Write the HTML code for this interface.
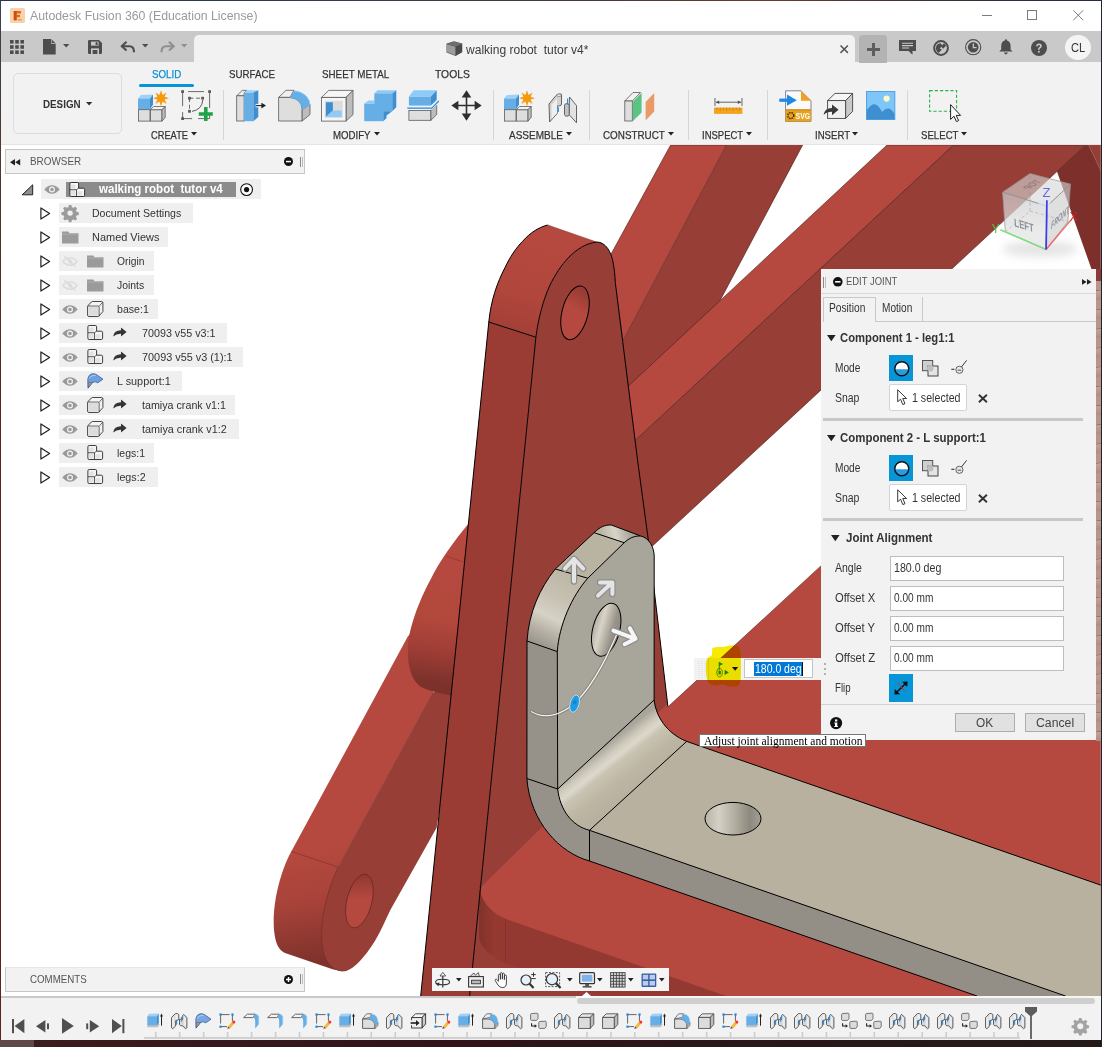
<!DOCTYPE html>
<html lang="en">
<head>
<meta charset="utf-8">
<title>Autodesk Fusion 360 (Education License)</title>
<style>
html,body{margin:0;padding:0;}
body{width:1102px;height:1047px;overflow:hidden;position:relative;background:#fff;font-family:"Liberation Sans",sans-serif;font-size:12px;color:#333;}
.abs{position:absolute;}
.t{position:absolute;white-space:nowrap;line-height:1;}
svg{position:absolute;overflow:visible;}
/*CSS-END*/
</style>
</head>
<body>
<!-- ===== 3D SCENE ===== -->
<svg id="scene" style="left:0;top:0" width="1102" height="1047" viewBox="0 0 1102 1047">
<defs>
<clipPath id="vp"><rect x="1" y="145" width="1099.8" height="851"/></clipPath>
<linearGradient id="gBaseFront" x1="479" y1="0" x2="510" y2="0" gradientUnits="userSpaceOnUse"><stop offset="0" stop-color="#7f322c"/><stop offset="0.5" stop-color="#96392f"/><stop offset="1" stop-color="#943832"/></linearGradient>
<linearGradient id="gArmEnd" x1="300" y1="850" x2="320" y2="960" gradientUnits="userSpaceOnUse"><stop offset="0" stop-color="#b5493f"/><stop offset="0.45" stop-color="#a9433a"/><stop offset="1" stop-color="#7f322c"/></linearGradient>
<linearGradient id="gKnob" x1="445" y1="560" x2="425" y2="695" gradientUnits="userSpaceOnUse"><stop offset="0" stop-color="#b5493f"/><stop offset="0.45" stop-color="#b2473c"/><stop offset="0.68" stop-color="#9d3d35"/><stop offset="0.88" stop-color="#7f322c"/><stop offset="1" stop-color="#7a302b"/></linearGradient>
<linearGradient id="gUpTop" x1="540" y1="230" x2="510" y2="335" gradientUnits="userSpaceOnUse"><stop offset="0" stop-color="#b5493f"/><stop offset="0.6" stop-color="#b1463c"/><stop offset="1" stop-color="#a23f37"/></linearGradient>
<linearGradient id="gHoleR" x1="350" y1="875" x2="365" y2="925" gradientUnits="userSpaceOnUse"><stop offset="0" stop-color="#8e3730"/><stop offset="0.5" stop-color="#b5493f"/><stop offset="1" stop-color="#b5493f"/></linearGradient>
<linearGradient id="gHoleR2" x1="585" y1="285" x2="570" y2="335" gradientUnits="userSpaceOnUse"><stop offset="0" stop-color="#8e3730"/><stop offset="0.5" stop-color="#b5493f"/><stop offset="1" stop-color="#b5493f"/></linearGradient>
<linearGradient id="gFillet" x1="606" y1="745" x2="638" y2="786" gradientUnits="userSpaceOnUse"><stop offset="0" stop-color="#a9a59b"/><stop offset="0.18" stop-color="#cfcabb"/><stop offset="0.3" stop-color="#dcd8cc"/><stop offset="0.42" stop-color="#c9c3b2"/><stop offset="0.7" stop-color="#bdb6a3"/><stop offset="1" stop-color="#b8b1a0"/></linearGradient>
<linearGradient id="gRound1" x1="575" y1="575" x2="540" y2="648" gradientUnits="userSpaceOnUse"><stop offset="0" stop-color="#bcb6a5"/><stop offset="0.35" stop-color="#c6c1b2"/><stop offset="0.6" stop-color="#d6d2c6"/><stop offset="0.8" stop-color="#b5b0a3"/><stop offset="1" stop-color="#96928a"/></linearGradient>
<linearGradient id="gRound2" x1="600" y1="535" x2="630" y2="530" gradientUnits="userSpaceOnUse"><stop offset="0" stop-color="#b9b3a2"/><stop offset="0.5" stop-color="#d8d4c8"/><stop offset="1" stop-color="#a8a59b"/></linearGradient>
<linearGradient id="gHoleG" x1="592" y1="0" x2="620" y2="0" gradientUnits="userSpaceOnUse"><stop offset="0" stop-color="#aeaa9e"/><stop offset="0.3" stop-color="#d8d4c9"/><stop offset="0.5" stop-color="#bcb7a9"/><stop offset="0.74" stop-color="#98948b"/><stop offset="1" stop-color="#8e8a82"/></linearGradient>
<linearGradient id="gHoleG2" x1="705" y1="0" x2="761" y2="0" gradientUnits="userSpaceOnUse"><stop offset="0" stop-color="#b9b4a6"/><stop offset="0.25" stop-color="#d4d0c5"/><stop offset="0.55" stop-color="#b0ab9d"/><stop offset="0.8" stop-color="#8d897f"/><stop offset="1" stop-color="#a39f93"/></linearGradient>
<filter id="blur4" x="-30%" y="-100%" width="160%" height="300%"><feGaussianBlur stdDeviation="4"/></filter>
<linearGradient id="gCubeL" x1="0" y1="195" x2="0" y2="250" gradientUnits="userSpaceOnUse"><stop offset="0" stop-color="#cfcfcf"/><stop offset="1" stop-color="#ececec"/></linearGradient>
<!--SCENE-DEFS-->
</defs>
<g clip-path="url(#vp)">
<rect x="0" y="140" width="1102" height="860" fill="#ffffff"/>
<g stroke="#4a1c18" stroke-width="0.6" stroke-linejoin="round">
<!-- far right beams -->
<polygon points="1088.5,145 1101,145 1101,171" fill="#963d35" stroke="none"/>
<polygon points="1084.8,145 1088.5,145 1101,171 1101,296 1056.9,171.2" fill="#7d302b" stroke="none"/>
<!-- beam 1 (steep) -->
<polygon points="726.3,145 802.7,145 720,300.7 715,330 622,420 623,340.6" fill="#973e36" stroke="none"/><path d="M802.7,145 L720,300.7" fill="none"/>
<polygon points="670.6,145 726.3,145 623,340.6 610,256" fill="#b5493f"/>
<!-- beam 2 -->
<polygon points="953.5,145 1084.8,145 1056.9,171.6 640,557.6 630,445.2" fill="#973e36"/>
<polygon points="887,145 953.5,145 630,445.2 624,390.1 720,300.7" fill="#b5493f"/>
<!-- lower-left arm -->
<path d="M440,600 L407.8,636.5 L291.3,851.5 C280,872 272,905 274,930 C275.5,945 279,950 285,952.9 L332.6,969.2 L342.7,971.2 L338.2,867.2 L433,692.5 L460,640 Z" fill="url(#gArmEnd)" stroke="none"/>
<path d="M433,692.5 L338.2,867.2 C326,892 319,925 322.6,947.9 C325,962 331,970 342.7,971.2 C352,972 365,957 375.2,940.4 C381,931 386,919 390.2,910.3 L436.6,827.7 L460,680 Z" fill="#973e36" stroke="none"/>
<path d="M291.3,851.5 L338.2,867.2" stroke="#6b2924" stroke-width="0.5" fill="none"/>
<path d="M433,692.5 L338.2,867.2 C326,892 319,925 322.6,947.9 C325,962 331,970 342.7,971.2" stroke="#6b2924" stroke-width="0.5" fill="none"/>
<ellipse cx="359.4" cy="901" rx="12.5" ry="27.5" transform="rotate(14 359.4 901)" fill="url(#gHoleR)" stroke="#5a211d" stroke-width="0.6"/>
<!-- knob -->
<path d="M468.4,523.8 C455,540 440,560 430.3,580 C418,603 408,630 407.8,650 C407.5,668 412,680 420.3,686.6 C430,692 440,693 452,696 L470,600 Z" fill="url(#gKnob)" stroke="none"/>
<path d="M446.6,556.3 L463.4,562" stroke="#7a2e29" stroke-width="0.5" fill="none"/>
<!-- upright side face -->
<path d="M488.8,322 L420.7,996 L469.6,996 L535.9,337.2 Z" fill="#9a3b34" stroke="none"/>
<path d="M488.8,322 C491,300 497,283 505,267.6 C510,257 516,248 522.6,241.3 C530,233 538,227.5 547.7,225 L596.5,242 C575,245 560,265 550,285 C543,300 538,320 535.9,337.2 Z" fill="url(#gUpTop)" stroke="none"/>
<!-- upright front face -->
<path d="M535.9,337.2 C538,320 543,300 550,285 C560,265 575,245 596.5,242 C606,242 611,252 613,262 C614.5,270 615,276 615.3,282.6 L637.8,462 L648,537.7 L667.9,706.4 L700,996 L469.6,996 Z" fill="#973e36" stroke="none"/>
<!-- base: big light red -->
<path d="M479.2,886 L479.2,938 Q481,952 505.5,963 L600,996 L730,996 L560,900 Z" fill="url(#gBaseFront)" stroke="none"/>
<path d="M479.4,888.5 L667.2,704 L667.7,707.1 L821.1,565.7 L1101,310 L1101,996 L726,996 L506.5,919.2 C494,914 482,904 479.4,888.5 Z" fill="#b5493f" stroke="none"/>
<line x1="667.7" y1="707.1" x2="830" y2="557.5" stroke-width="0.5"/>
<line x1="505.5" y1="919" x2="505.5" y2="963" stroke="#7a2e29" stroke-width="0.6"/>

<!-- upright outlines -->
<path d="M420.7,996 L488.8,322 C491,300 497,283 505,267.6 C510,257 516,248 522.6,241.3 C530,233 538,227.5 547.7,225" fill="none" stroke="#000" stroke-width="1"/><path d="M547.7,225 L596.5,242" fill="none" stroke="#7a2f29" stroke-width="0.5"/><path d="M596.5,242 C606,242 611,252 613,262 C614.5,270 615,276 615.3,282.6 L637.8,462 L648,537.7 L667.9,706.4" fill="none" stroke="#000" stroke-width="1"/>
<path d="M469.6,996 L535.9,337.2 C538,320 543,300 550,285 C560,265 575,245 596.5,242" fill="none" stroke="#000" stroke-width="1"/>
<path d="M488.8,322 L535.9,337.2" fill="none" stroke="#000" stroke-width="1"/>
<ellipse cx="575" cy="312.8" rx="13" ry="27.5" transform="rotate(14 575 312.8)" fill="url(#gHoleR2)" stroke="#000" stroke-width="1"/>
</g>
<!-- ===== grey L bracket ===== -->
<g stroke="#000" stroke-width="1" stroke-linejoin="round">
<!-- horizontal plate top face -->
<path d="M686.7,741.4 L1101,885.2 L1101,996 L1065.5,996 L589.5,830.3 Z" fill="#b8b1a0" stroke="none"/>
<!-- plate front face -->
<path d="M589.5,830.3 L1065.5,996 L977,996 L589.5,861 Z" fill="#948f86" stroke="none"/>
<!-- fillet face (between vertical and horizontal) -->
<path d="M557.7,789 L654.1,700 C656,716 666,733 686.7,741.4 L589.5,830.3 C572,826 560,810 557.7,789 Z" fill="url(#gFillet)" stroke="none"/>
<!-- side (thickness) face lower: from vertical down around bend -->
<path d="M526.9,778.5 L557.7,789 C560,810 572,826 589.5,830.3 L589.5,861 C560,853 530,822 526.9,778.5 Z" fill="#96928a" stroke="none"/>
<!-- side face vertical part -->
<path d="M527,641 L557.3,651.6 L557.7,789 L526.9,778.5 Z" fill="#96928a" stroke="none"/>
<!-- side face rounded top -->
<path d="M527,641 C529,612 540,588 555.3,569 L587.8,578.2 C572,596 559,625 557.3,651.6 Z" fill="url(#gRound1)" stroke="none"/>
<!-- side face diagonal flat -->
<path d="M555.3,569 L594.1,532.7 L624.2,542.7 L587.8,578.2 Z" fill="#b9b3a2" stroke="none"/>
<!-- side face top rounded -->
<path d="M594.1,532.7 C600,527 605,524.5 611.6,525.1 L640.4,535.9 C633,536 629,538.5 624.2,542.7 Z" fill="url(#gRound2)" stroke="none"/>
<!-- front face of vertical lobe -->
<path d="M557.3,651.6 C559,625 572,596 587.8,578.2 L624.2,542.7 C629,538.5 633,536 640.4,535.9 C650,538 654,548 654.2,556 L654.1,700 L557.7,789 Z" fill="#a8a59b" stroke="none"/>
<!-- outlines -->
<path d="M526.9,778.5 L527,641 C529,612 540,588 555.3,569 L594.1,532.7 C600,527 605,524.5 611.6,525.1 L640.4,535.9 C650,538 654,548 654.2,556 L654.1,700 C656,716 666,733 686.7,741.4 L1101,885.2" fill="none"/>
<path d="M557.7,789 L557.3,651.6 C559,625 572,596 587.8,578.2 L624.2,542.7 C629,538.5 633,536 640.4,535.9" fill="none"/>
<path d="M527,641 L557.3,651.6 M555.3,569 L587.8,578.2 M594.1,532.7 L624.2,542.7 M526.9,778.5 L557.7,789 L654.1,700 M589.5,830.3 L686.7,741.4 M589.5,830.3 L589.5,861" fill="none"/>
<path d="M557.7,789 C560,810 572,826 589.5,830.3 L1065.5,996" fill="none"/>
<path d="M526.9,778.5 C530,822 560,853 589.5,861 L977,996" fill="none"/>
<!-- holes -->
<ellipse cx="606.2" cy="629.7" rx="13.4" ry="27.2" transform="rotate(15 606.2 629.7)" fill="url(#gHoleG)"/>
<ellipse cx="733" cy="818.7" rx="28" ry="16.3" fill="url(#gHoleG2)"/>
</g>
<!-- manipulators -->
<g fill="none" stroke-linecap="round" stroke-linejoin="round">
<path d="M531.4,711.6 C546,720.5 562,714 574.5,703.4 C590,689 604,664 616.5,635" stroke="#6f6c66" stroke-opacity="0.42" stroke-width="3.4"/>
<path d="M531.4,711.6 C546,720.5 562,714 574.5,703.4 C590,689 604,664 616.5,635" stroke="#ffffff" stroke-width="1.05"/>
<g stroke="#8e8e8e" stroke-width="6.4"><path d="M574,581.5V560M565,568.6L574,558.8L583.2,568.6"/><path d="M598,595.6L611.4,583.2M600,582.4H612.4V594"/><path d="M613.4,630.6L634,638.4M629.8,628.2L635.6,638.8L624.6,644.2"/></g>
<g stroke="#e4e4e4" stroke-width="4"><path d="M574,581.5V560M565,568.6L574,558.8L583.2,568.6"/><path d="M598,595.6L611.4,583.2M600,582.4H612.4V594"/></g>
<g stroke="#f6f6f6" stroke-width="4"><path d="M613.4,630.6L634,638.4M629.8,628.2L635.6,638.8L624.6,644.2"/></g>
</g>
<g transform="rotate(15 574.6 703.6)"><ellipse cx="574.6" cy="703.6" rx="5.6" ry="10" fill="#8c8a84" fill-opacity="0.55"/><ellipse cx="574.6" cy="703.6" rx="4.5" ry="8.9" fill="#1d9ce6" stroke="#dfe9f0" stroke-width="0.8"/><ellipse cx="574.4" cy="702.4" rx="1.1" ry="1.5" fill="none" stroke="#0d5f96" stroke-width="0.6"/></g>
<!-- view cube -->
<ellipse cx="1040" cy="249" rx="38" ry="8" fill="#000" fill-opacity="0.10" filter="url(#blur4)"/>
<g stroke="#8f8f8f" stroke-width="0.7" stroke-linejoin="round">
<polygon points="1002.5,192.2 1030,173.5 1070.5,184.1 1047,206.2" fill="#d6d6d6" fill-opacity="0.62"/>
<polygon points="1002.5,192.2 1047,206.2 1046.1,249.5 1005.4,231.9" fill="url(#gCubeL)" fill-opacity="0.72"/>
<polygon points="1047,206.2 1070.5,184.1 1067.9,221.6 1046.1,249.5" fill="#cfcfcf" fill-opacity="0.66"/>
</g>
<path d="M1005.4,231.9 L1030,211 L1067.9,221.6 M1030,211 L1030,173.5" stroke="#8a8a8a" stroke-width="0.6" stroke-dasharray="3 2.4" fill="none" opacity="0.7"/>
<rect x="1038.5" y="200.5" width="12" height="13" fill="#dfe3ea" opacity="0.75"/>
<text transform="matrix(0.954 0.30 0.073 0.997 1014.6 226.2)" font-family="Liberation Sans, sans-serif" font-weight="bold" font-size="11.5" fill="#8b929b" textLength="20.5" lengthAdjust="spacingAndGlyphs">LEFT</text>
<text transform="matrix(0.728 -0.685 -0.02 1 1051 229.5)" font-family="Liberation Sans, sans-serif" font-weight="bold" font-style="italic" font-size="10.5" fill="#8b929b" textLength="25" lengthAdjust="spacingAndGlyphs">FRONT</text>
<text transform="matrix(-0.78 0.50 0.95 0.30 1042 181.4)" font-family="Liberation Sans, sans-serif" font-weight="bold" font-size="10" fill="#8a7f7e" textLength="17" lengthAdjust="spacingAndGlyphs">TOP</text>
<path d="M1046.1,249.5 L1000.3,229.7" stroke="#7fe07f" stroke-width="1.6"/>
<path d="M1046.1,249.5 L1070.8,220.1" stroke="#f06a66" stroke-width="1.4"/>
<path d="M1046.9,200.3 L1046.1,249.5" stroke="#3a3af0" stroke-width="1.7"/>
<text x="1042.6" y="197.3" font-family="Liberation Sans, sans-serif" font-size="13" fill="#6868ee">Z</text>
<text x="991.5" y="232.5" font-family="Liberation Sans, sans-serif" font-size="12.5" fill="#53c653">Y</text>
<text x="1069.6" y="221" font-family="Liberation Sans, sans-serif" font-size="12.5" fill="#d8221c">X</text>
<!--SCENE-BODY-->
</g>
</svg>
<!-- ===== CHROME ===== -->
<!--CHROME-->
<!-- frag_top.html -->
<div class="abs" style="left:1.0px;top:1.0px;width:1099.8px;height:30.0px;background:#ffffff"></div>
<div class="abs" style="left:1.0px;top:31.0px;width:1099.8px;height:31.5px;background:#c9c9c9"></div>
<div class="abs" style="left:1.0px;top:62.0px;width:1099.8px;height:82.5px;background:#f2f2f2"></div>
<div class="abs" style="left:1.0px;top:144.0px;width:1099.8px;height:1.0px;background:#e4e4e4"></div>
<div class="abs" style="left:194.0px;top:35.0px;width:661.0px;height:27.5px;background:#f2f2f2;border-radius:5px 5px 0 0"></div>
<div class="abs" style="left:859.0px;top:35.0px;width:28.0px;height:27.5px;background:#b3b3b3;border-radius:4px 4px 0 0"></div>
<svg style="left:9.5px;top:7.5px" width="15" height="15" viewBox="0 0 15 15"><rect x="0" y="0" width="15" height="15" rx="1.5" fill="#f8d2ac"/><path d="M3.8,12.2V3H11V5.4H6.6V6.8H10V9.2H6.6V12.2Z" fill="#e06a1e"/><path d="M3.8,12.2V3H6.6V12.2Z" fill="#c8500c"/><rect x="7.6" y="11" width="4.4" height="1.5" fill="#f09a55"/></svg>
<span class="t" style="left:30.0px;top:9.0px;font-size:13.00px;color:#9a9a9a;transform:scaleX(0.9453);transform-origin:0 0;">Autodesk Fusion 360 (Education License)</span>
<svg style="left:982.0px;top:15.0px" width="10" height="1" viewBox="0 0 10 1"><rect width="10" height="1" fill="#7c7c7c"/></svg>
<svg style="left:1027.0px;top:10.0px" width="10" height="10" viewBox="0 0 10 10"><rect x="0.5" y="0.5" width="9" height="9" fill="none" stroke="#7c7c7c" stroke-width="1"/></svg>
<svg style="left:1072.5px;top:10.0px" width="10.5" height="10.5" viewBox="0 0 10.5 10.5"><path d="M0.3,0.3L10.2,10.2M10.2,0.3L0.3,10.2" stroke="#7c7c7c" stroke-width="1" fill="none"/></svg>
<svg style="left:10.0px;top:40.0px" width="14.2" height="14.2" viewBox="0 0 14.2 14.2"><rect x="0" y="0" width="3.6" height="3.6" fill="#4d4d4d"/><rect x="0" y="5.2" width="3.6" height="3.6" fill="#4d4d4d"/><rect x="0" y="10.4" width="3.6" height="3.6" fill="#4d4d4d"/><rect x="5.2" y="0" width="3.6" height="3.6" fill="#4d4d4d"/><rect x="5.2" y="5.2" width="3.6" height="3.6" fill="#4d4d4d"/><rect x="5.2" y="10.4" width="3.6" height="3.6" fill="#4d4d4d"/><rect x="10.4" y="0" width="3.6" height="3.6" fill="#4d4d4d"/><rect x="10.4" y="5.2" width="3.6" height="3.6" fill="#4d4d4d"/><rect x="10.4" y="10.4" width="3.6" height="3.6" fill="#4d4d4d"/></svg>
<svg style="left:43.0px;top:38.8px" width="13" height="15.6" viewBox="0 0 13 15.6"><path d="M0,0H8L12.7,4.7V15.6H0Z" fill="#4d4d4d"/><path d="M8,0V4.7H12.7" fill="#c9c9c9" /><path d="M8.6,0.6 L12.1,4.1 H8.6Z" fill="#4d4d4d"/></svg>
<svg style="left:62.6px;top:44.3px" width="6.4" height="3.4" viewBox="0 0 6.4 3.4"><polygon points="0,0 6.4,0 3.2,3.4" fill="#4d4d4d"/></svg>
<svg style="left:88.0px;top:39.5px" width="14" height="14" viewBox="0 0 14 14"><path d="M0,1.2Q0,0 1.2,0H11L14,3V12.8Q14,14 12.8,14H1.2Q0,14 0,12.8Z" fill="#4d4d4d"/><rect x="3" y="1.6" width="7.6" height="4" fill="#c9c9c9"/><rect x="7.6" y="2.2" width="2" height="2.8" fill="#4d4d4d"/><rect x="3" y="8.4" width="8" height="5.6" fill="#c9c9c9"/><rect x="4.6" y="10" width="4.8" height="4" fill="#4d4d4d"/></svg>
<svg style="left:121.0px;top:41.0px" width="14.5" height="12" viewBox="0 0 14.5 12"><path d="M5.5,0.8L0.8,5.2L5.5,9.6" fill="none" stroke="#4d4d4d" stroke-width="2.1" stroke-linejoin="miter"/><path d="M1.5,5.2H8.5Q13,5.2 13,11.3" fill="none" stroke="#4d4d4d" stroke-width="2.1"/></svg>
<svg style="left:141.5px;top:44.3px" width="6.4" height="3.4" viewBox="0 0 6.4 3.4"><polygon points="0,0 6.4,0 3.2,3.4" fill="#4d4d4d"/></svg>
<svg style="left:159.5px;top:41px;transform:scaleX(-1)" width="14.5" height="12" viewBox="0 0 14.5 12"><path d="M5.5,0.8L0.8,5.2L5.5,9.6" fill="none" stroke="#8f8f8f" stroke-width="2.1" stroke-linejoin="miter"/><path d="M1.5,5.2H8.5Q13,5.2 13,11.3" fill="none" stroke="#8f8f8f" stroke-width="2.1"/></svg>
<svg style="left:180.6px;top:44.3px" width="6.4" height="3.4" viewBox="0 0 6.4 3.4"><polygon points="0,0 6.4,0 3.2,3.4" fill="#8f8f8f"/></svg>
<svg style="left:445.5px;top:41.0px" width="17" height="15.5" viewBox="0 0 17 15.5"><path d="M0.5,2.6L8,0.3L16.3,2.6V11.2L9.6,15L0.5,11.4Z" fill="#5a5a5a"/><path d="M0.9,3.2L9.4,5.8V14.3L0.9,11Z" fill="#9c9c9c"/><path d="M9.8,5.8L16,3.2V11L9.8,14.4Z" fill="#4a4a4a"/><path d="M1,2.8L8,0.7L15.8,2.8L9.6,5.3Z" fill="#6e6e6e"/></svg>
<span class="t" style="left:466.2px;top:43.0px;font-size:13.00px;color:#3c3c3c;transform:scaleX(0.9264);transform-origin:0 0;">walking robot &nbsp;tutor v4*</span>
<svg style="left:840.0px;top:45.0px" width="8.4" height="8.4" viewBox="0 0 8.4 8.4"><path d="M0.5,0.5L7.9,7.9M7.9,0.5L0.5,7.9" stroke="#555" stroke-width="1.5" fill="none"/></svg>
<svg style="left:867.0px;top:42.5px" width="13" height="13" viewBox="0 0 13 13"><path d="M6.5,0V13M0,6.5H13" stroke="#5e5e5e" stroke-width="3" fill="none"/></svg>
<svg style="left:898.5px;top:39.6px" width="17" height="15" viewBox="0 0 17 15"><path d="M0,0H17V11H13.5V14.8L9.6,11H0Z" fill="#4d4d4d"/><path d="M3,3.2H14M3,5.6H14M3,8H10" stroke="#c9c9c9" stroke-width="1.1"/></svg>
<svg style="left:932.5px;top:39.5px" width="16" height="16" viewBox="0 0 16 16"><circle cx="8" cy="8" r="6.9" fill="none" stroke="#4d4d4d" stroke-width="2"/><path d="M4,11.5A5,5 0 0 1 7.5,3.2L9.5,5.5L6.8,8.6L9,9.6L5.6,13Z" fill="#4d4d4d"/><path d="M11,3.2L13.2,5.6L10.2,8.8L8,6.6Z" fill="#4d4d4d"/></svg>
<svg style="left:965.0px;top:39.3px" width="16.4" height="16.4" viewBox="0 0 16.4 16.4"><circle cx="8.2" cy="8.2" r="7.6" fill="none" stroke="#4d4d4d" stroke-width="1.1"/><circle cx="8.2" cy="8.2" r="5.3" fill="#4d4d4d"/><path d="M8.4,4.6V8.6H11.6" stroke="#c9c9c9" stroke-width="1.3" fill="none"/></svg>
<svg style="left:998.8px;top:39.3px" width="13.8" height="15.6" viewBox="0 0 13.8 15.6"><path d="M6.9,0.2Q8,0.2 8,1.6Q11.6,2.8 11.6,7V10.4L13.6,12.6H0.2L2.2,10.4V7Q2.2,2.8 5.8,1.6Q5.8,0.2 6.9,0.2Z" fill="#4d4d4d"/><path d="M5,13.6H8.8Q8.6,15.4 6.9,15.4Q5.2,15.4 5,13.6Z" fill="#4d4d4d"/></svg>
<svg style="left:1031.0px;top:39.5px" width="16" height="16" viewBox="0 0 16 16"><circle cx="8" cy="8" r="8" fill="#4d4d4d"/><path d="M5.2,6.2Q5.2,3.4 8,3.4Q10.8,3.4 10.8,5.9Q10.8,7.4 9.3,8.2Q8.6,8.6 8.6,9.8H7Q7,8 8.1,7.3Q9.1,6.7 9.1,5.9Q9.1,4.9 8,4.9Q6.9,4.9 6.9,6.2Z" fill="#c9c9c9"/><rect x="7" y="10.8" width="1.7" height="1.8" fill="#c9c9c9"/></svg>
<div class="abs" style="left:1065.0px;top:34.7px;width:25.5px;height:25.5px;background:#f4f4f4;border-radius:50%"></div>
<span class="t" style="left:1070.8px;top:42.0px;font-size:12.50px;color:#333;transform:scaleX(0.8886);transform-origin:0 0;">CL</span>
<!-- frag_ribbon.html -->
<div class="abs" style="left:12.7px;top:73.3px;width:106.9px;height:58.3px;border:1.3px solid #dcdcdc;border-radius:5px;background:#f2f2f2"></div>
<span class="t" style="left:43.2px;top:99.0px;font-size:11.50px;color:#333;font-weight:bold;transform:scaleX(0.8528);transform-origin:0 0;">DESIGN</span>
<svg style="left:85.9px;top:102.1px" width="6.3" height="3.6" viewBox="0 0 6.3 3.6"><polygon points="0,0 6.3,0 3.15,3.6" fill="#333"/></svg>
<span class="t" style="left:151.7px;top:69.0px;font-size:11.50px;color:#0c8ed0;transform:scaleX(0.8490);transform-origin:0 0;-webkit-text-stroke:0.25px currentColor;">SOLID</span>
<div class="abs" style="left:139.2px;top:83.8px;width:54.6px;height:3.4px;background:#0696d7;border-radius:1.7px"></div>
<span class="t" style="left:229.4px;top:69.0px;font-size:11.50px;color:#333;transform:scaleX(0.8469);transform-origin:0 0;-webkit-text-stroke:0.25px currentColor;">SURFACE</span>
<span class="t" style="left:322.0px;top:69.0px;font-size:11.50px;color:#333;transform:scaleX(0.8526);transform-origin:0 0;-webkit-text-stroke:0.25px currentColor;">SHEET METAL</span>
<span class="t" style="left:435.0px;top:69.0px;font-size:11.50px;color:#333;transform:scaleX(0.8975);transform-origin:0 0;-webkit-text-stroke:0.25px currentColor;">TOOLS</span>
<div class="abs" style="left:223.0px;top:89.5px;width:1.0px;height:50.5px;background:#d6d6d6"></div>
<div class="abs" style="left:492.5px;top:89.5px;width:1.0px;height:50.5px;background:#d6d6d6"></div>
<div class="abs" style="left:588.8px;top:89.5px;width:1.0px;height:50.5px;background:#d6d6d6"></div>
<div class="abs" style="left:688.3px;top:89.5px;width:1.0px;height:50.5px;background:#d6d6d6"></div>
<div class="abs" style="left:767.0px;top:89.5px;width:1.0px;height:50.5px;background:#d6d6d6"></div>
<div class="abs" style="left:907.0px;top:89.5px;width:1.0px;height:50.5px;background:#d6d6d6"></div>
<span class="t" style="left:150.8px;top:130.0px;font-size:11.50px;color:#333;transform:scaleX(0.8080);transform-origin:0 0;-webkit-text-stroke:0.25px currentColor;">CREATE</span>
<svg style="left:191.3px;top:132.4px" width="6" height="3.6" viewBox="0 0 6 3.6"><polygon points="0,0 6,0 3,3.6" fill="#222"/></svg>
<span class="t" style="left:332.5px;top:130.0px;font-size:11.50px;color:#333;transform:scaleX(0.8385);transform-origin:0 0;-webkit-text-stroke:0.25px currentColor;">MODIFY</span>
<svg style="left:374.3px;top:132.4px" width="6" height="3.6" viewBox="0 0 6 3.6"><polygon points="0,0 6,0 3,3.6" fill="#222"/></svg>
<span class="t" style="left:508.6px;top:130.0px;font-size:11.50px;color:#333;transform:scaleX(0.8693);transform-origin:0 0;-webkit-text-stroke:0.25px currentColor;">ASSEMBLE</span>
<svg style="left:565.9px;top:132.4px" width="6" height="3.6" viewBox="0 0 6 3.6"><polygon points="0,0 6,0 3,3.6" fill="#222"/></svg>
<span class="t" style="left:603.3px;top:130.0px;font-size:11.50px;color:#333;transform:scaleX(0.8561);transform-origin:0 0;-webkit-text-stroke:0.25px currentColor;">CONSTRUCT</span>
<svg style="left:667.9px;top:132.4px" width="6" height="3.6" viewBox="0 0 6 3.6"><polygon points="0,0 6,0 3,3.6" fill="#222"/></svg>
<span class="t" style="left:702.4px;top:130.0px;font-size:11.50px;color:#333;transform:scaleX(0.8246);transform-origin:0 0;-webkit-text-stroke:0.25px currentColor;">INSPECT</span>
<svg style="left:746.1px;top:132.4px" width="6" height="3.6" viewBox="0 0 6 3.6"><polygon points="0,0 6,0 3,3.6" fill="#222"/></svg>
<span class="t" style="left:814.5px;top:130.0px;font-size:11.50px;color:#333;transform:scaleX(0.8340);transform-origin:0 0;-webkit-text-stroke:0.25px currentColor;">INSERT</span>
<svg style="left:852.3px;top:132.4px" width="6" height="3.6" viewBox="0 0 6 3.6"><polygon points="0,0 6,0 3,3.6" fill="#222"/></svg>
<span class="t" style="left:921.0px;top:130.0px;font-size:11.50px;color:#333;transform:scaleX(0.8382);transform-origin:0 0;-webkit-text-stroke:0.25px currentColor;">SELECT</span>
<svg style="left:961.2px;top:132.4px" width="6" height="3.6" viewBox="0 0 6 3.6"><polygon points="0,0 6,0 3,3.6" fill="#222"/></svg>
<svg style="left:136.8px;top:90.0px" width="32" height="32" viewBox="0 0 32 32"><polygon points="1,8.5 4,5 16,4.5 13,8.5" fill="#9fd0f7"/><polygon points="13,8.5 16,4.5 16,14.5 13,19.5" fill="#3f8fd0"/><rect x="1" y="8.5" width="12" height="11.2" fill="#66aee6"/>
<rect x="1.4" y="19.7" width="11.6" height="11.4" fill="#dedede" stroke="#5a5a5a" stroke-width="0.8"/><rect x="13.4" y="19.7" width="11.6" height="11.4" fill="#dedede" stroke="#5a5a5a" stroke-width="0.8"/>
<polygon points="13.4,19.7 16.6,16.5 28.2,16.5 25,19.7" fill="#f2f2f2" stroke="#5a5a5a" stroke-width="0.8"/><polygon points="25,19.7 28.2,16.5 28.2,27.4 25,31.1" fill="#bdbdbd" stroke="#5a5a5a" stroke-width="0.8"/>
<polygon points="24,0.2 25.6,5 29.6,2.4 27.6,6.8 32,8.2 27.6,9.6 29.6,14 25.6,11.4 24,16.2 22.4,11.4 18.4,14 20.4,9.6 16,8.2 20.4,6.8 18.4,2.4 22.4,5" fill="#f59a0c"/></svg>
<svg style="left:503.2px;top:90.0px" width="32" height="32" viewBox="0 0 32 32"><polygon points="1,8.5 4,5 16,4.5 13,8.5" fill="#9fd0f7"/><polygon points="13,8.5 16,4.5 16,14.5 13,19.5" fill="#3f8fd0"/><rect x="1" y="8.5" width="12" height="11.2" fill="#66aee6"/>
<rect x="1.4" y="19.7" width="11.6" height="11.4" fill="#dedede" stroke="#5a5a5a" stroke-width="0.8"/><rect x="13.4" y="19.7" width="11.6" height="11.4" fill="#dedede" stroke="#5a5a5a" stroke-width="0.8"/>
<polygon points="13.4,19.7 16.6,16.5 28.2,16.5 25,19.7" fill="#f2f2f2" stroke="#5a5a5a" stroke-width="0.8"/><polygon points="25,19.7 28.2,16.5 28.2,27.4 25,31.1" fill="#bdbdbd" stroke="#5a5a5a" stroke-width="0.8"/>
<polygon points="24,0.2 25.6,5 29.6,2.4 27.6,6.8 32,8.2 27.6,9.6 29.6,14 25.6,11.4 24,16.2 22.4,11.4 18.4,14 20.4,9.6 16,8.2 20.4,6.8 18.4,2.4 22.4,5" fill="#f59a0c"/></svg>
<svg style="left:180.6px;top:89.9px" width="32" height="32" viewBox="0 0 32 32"><rect x="1.6" y="1.6" width="27" height="27" fill="none" stroke="#5a5a5a" stroke-width="0.9" stroke-dasharray="16 6" stroke-dashoffset="-5.5"/>
<rect x="0.2" y="0.2" width="2.8" height="2.8" fill="#5a5a5a"/><rect x="27.2" y="0.2" width="2.8" height="2.8" fill="#5a5a5a"/><rect x="0.2" y="27.2" width="2.8" height="2.8" fill="#5a5a5a"/>
<path d="M8.5,8.2H21.5" stroke="#5a5a5a" stroke-width="0.9" stroke-dasharray="4 2.5" fill="none"/><path d="M8.5,8.2V21.3" stroke="#5a5a5a" stroke-width="0.9" stroke-dasharray="4 2.5" fill="none"/>
<path d="M21.8,10Q21,19.5 11,21.4" stroke="#5a5a5a" stroke-width="1" fill="none"/>
<rect x="7.1" y="6.8" width="2.8" height="2.8" fill="#5a5a5a"/><rect x="20.2" y="6.8" width="2.8" height="2.8" fill="#5a5a5a"/><rect x="7.1" y="19.9" width="2.8" height="2.8" fill="#5a5a5a"/>
<path d="M24.8,17V31M17.8,24H31.8" stroke="#1fa44a" stroke-width="3.6" fill="none"/></svg>
<svg style="left:235.5px;top:90.0px" width="32" height="32" viewBox="0 0 32 32"><polygon points="0.7,5.8 6.3,0.4 11,0.4 8.1,2.6 8.1,5.8" fill="#efefef" stroke="#5a5a5a" stroke-width="0.8" stroke-linejoin="round"/><rect x="0.7" y="5.8" width="7.4" height="25.2" fill="#dedede" stroke="#5a5a5a" stroke-width="0.8"/>
<polygon points="8.1,2.6 10.9,0.2 22.3,0.2 17.4,2.6" fill="#9fd0f7"/><rect x="8.1" y="2.6" width="9.3" height="28.6" fill="#66aee6"/><polygon points="17.4,2.6 22.3,0.2 22.3,27 17.4,31.2" fill="#3f8fd0"/>
<path d="M19.6,15.6H27" stroke="#f2f2f2" stroke-width="3.4" /><path d="M19.8,15.6H27" stroke="#222" stroke-width="1.1"/><polygon points="25.4,12.8 30,15.6 25.4,18.4" fill="#222"/></svg>
<svg style="left:278.0px;top:90.0px" width="32.5" height="32" viewBox="0 0 32.5 32"><path d="M0.6,7.4 L8,0.3 H16 L12,7.4 Z" fill="#efefef" stroke="#5a5a5a" stroke-width="0.8" stroke-linejoin="round"/>
<path d="M0.6,7.4 H12 Q23.6,9 24.2,19.4 V31 H0.6Z" fill="#dedede" stroke="#5a5a5a" stroke-width="0.8" stroke-linejoin="round"/>
<path d="M24.2,19.6 L32,14.2 V24.6 L24.2,31Z" fill="#bdbdbd" stroke="#5a5a5a" stroke-width="0.8" stroke-linejoin="round"/>
<path d="M12,7.4 L16,0.9 Q24,1.4 28.6,6.6 Q32,10.6 32,15 L24.2,19.8 Q23.6,9 12,7.4Z" fill="#66aee6"/>
<path d="M16,0.9 Q24,1.4 28.6,6.6 Q32,10.6 32,15" fill="none" stroke="#8ec6f4" stroke-width="0.9"/></svg>
<svg style="left:320.5px;top:90.0px" width="32.5" height="32" viewBox="0 0 32.5 32"><polygon points="0.5,7.4 7.8,0.4 32,0.4 25,7.4" fill="#f6f6f6" stroke="#5a5a5a" stroke-width="0.8" stroke-linejoin="round"/><polygon points="25,7.4 32,0.4 32,24.6 25,31.1" fill="#bdbdbd" stroke="#5a5a5a" stroke-width="0.8" stroke-linejoin="round"/>
<rect x="0.5" y="7.4" width="24.5" height="23.7" fill="#f6f6f6" stroke="#5a5a5a" stroke-width="0.8"/>
<rect x="3.8" y="10.7" width="17.9" height="17.2" fill="#dcdcdc"/>
<polygon points="4.9,12.3 11.9,12.3 11.9,20.5 4.9,27" fill="#3f8fd0"/><polygon points="4.9,27 11.9,20.5 20.6,20.5 20.6,27" fill="#8ecbf8"/></svg>
<svg style="left:363.8px;top:90.0px" width="32.5" height="32" viewBox="0 0 32.5 32"><polygon points="10.3,3.4 13.5,0.2 32.3,0.2 28.2,3.4" fill="#8ecbf8"/><polygon points="28.2,3.4 32.3,0.2 32.3,17.2 28.2,21.3" fill="#3f8fd0"/><rect x="10.3" y="3.4" width="17.9" height="17.9" fill="#66aee6"/>
<polygon points="0.2,13.6 4.6,10.4 10.6,10.4 10.6,13.6" fill="#8ecbf8"/><rect x="0.2" y="13.6" width="19.1" height="17.6" fill="#66aee6"/>
<polygon points="19.3,21.3 28.2,21.3 22.5,25.4 22.5,27.9 19.3,31.2" fill="#3f8fd0"/></svg>
<svg style="left:407.3px;top:90.0px" width="32.5" height="32" viewBox="0 0 32.5 32"><rect x="1.9" y="20.5" width="22" height="9.8" fill="#dedede" stroke="#5a5a5a" stroke-width="0.8"/><polygon points="23.9,20.5 29.7,14.8 29.7,24.6 23.9,30.3" fill="#bdbdbd" stroke="#5a5a5a" stroke-width="0.8" stroke-linejoin="round"/>
<polygon points="1.9,6.6 6.8,0.2 29.7,0.2 23.9,6.6" fill="#8ecbf8"/><rect x="1.9" y="6.6" width="22" height="9" fill="#66aee6"/><polygon points="23.9,6.6 29.7,0.2 29.7,9.9 23.9,15.6" fill="#3f8fd0"/>
<path d="M0.3,18.1H24.8L31.8,11" fill="none" stroke="#f2f2f2" stroke-width="3"/><path d="M0.3,18.1H24.8L31.8,11" fill="none" stroke="#1e88e5" stroke-width="1.1"/></svg>
<svg style="left:450.5px;top:90.3px" width="31" height="31" viewBox="0 0 31 31"><path d="M15.5,4V27M4,15.5H27" stroke="#2f2f2f" stroke-width="1.6"/><polygon points="15.5,0.3 20.3,7.4 10.7,7.4" fill="#2f2f2f"/><polygon points="15.5,30.7 20.3,23.6 10.7,23.6" fill="#2f2f2f"/><polygon points="0.3,15.5 7.4,10.7 7.4,20.3" fill="#2f2f2f"/><polygon points="30.7,15.5 23.6,10.7 23.6,20.3" fill="#2f2f2f"/></svg>
<svg style="left:548.0px;top:91.5px" width="30" height="32" viewBox="0 0 30 32"><path d="M1,12 L8,3.5 Q10,1.6 12.5,2 L13.5,2.4 V12 Q13.5,13.6 11.5,13.8 L9.2,14 V21.5 L1.6,30 Z" fill="#d2d2d2" stroke="#555" stroke-width="0.9" stroke-linejoin="round"/>
<path d="M3.6,13.2 L9,6.4 V21 L3.6,27.2Z" fill="#efefef"/><ellipse cx="11" cy="3.2" rx="2.4" ry="1.2" fill="#f6f6f6" stroke="#555" stroke-width="0.6"/>
<path d="M21.5,5 L28.5,13.5 V30.8 L21,22.5 Z" fill="#e2e2e2" stroke="#555" stroke-width="0.9" stroke-linejoin="round"/>
<path d="M16.5,13.4 Q16.5,11.6 18.8,11.6 Q21.2,11.6 21.2,13.4 V22.5 Q21.2,24.2 18.8,24.2 Q16.5,24.2 16.5,22.5Z" fill="#c4c4c4" stroke="#555" stroke-width="0.9"/>
<path d="M19.6,6.5V12.6M10.3,15.2V20" stroke="#1e88e5" stroke-width="1.1"/></svg>
<svg style="left:623.6px;top:90.0px" width="31" height="32" viewBox="0 0 31 32"><polygon points="0.8,11 9,2.5 16.5,2.5 8.3,11" fill="#f2f2f2" stroke="#5a5a5a" stroke-width="0.8"/><rect x="0.8" y="11" width="7.5" height="20" fill="#dedede" stroke="#5a5a5a" stroke-width="0.8"/>
<polygon points="9,11.4 17.6,2.8 17.6,22.4 9,31" fill="#5cc483"/><polygon points="21.6,12 30.2,3 30.2,21.6 21.6,30.6" fill="#e89a67"/></svg>
<svg style="left:714.0px;top:98.0px" width="28.4" height="16" viewBox="0 0 28.4 16"><path d="M1,0V8M28,0V8" stroke="#555" stroke-width="0.9"/><path d="M2,4.2H27" stroke="#555" stroke-width="0.9"/><polygon points="1.6,4.2 5.2,2.4 5.2,6" fill="#555"/><polygon points="27.4,4.2 23.8,2.4 23.8,6" fill="#555"/>
<rect x="0" y="9.6" width="28.4" height="6.3" fill="#f3a31f"/><path d="M3,9.6V12M6.2,9.6V12.8M9.4,9.6V12M12.6,9.6V12.8M15.8,9.6V12M19,9.6V12.8M22.2,9.6V12M25.4,9.6V12.8" stroke="#c27a08" stroke-width="0.8"/></svg>
<svg style="left:778.8px;top:89.6px" width="32.5" height="32" viewBox="0 0 32.5 32"><path d="M6.6,0.8H22L32,10.8V31.5H6.6Z" fill="#fafafa" stroke="#6a6a6a" stroke-width="0.8"/><polygon points="22,0.8 32,10.8 22,10.8" fill="#f0a022"/>
<rect x="6.6" y="19.4" width="25.4" height="12.1" fill="#e9a11f"/><rect x="6.6" y="19.4" width="25.4" height="1" fill="#c78410"/>
<circle cx="11.8" cy="25.6" r="3" fill="none" stroke="#3a2a00" stroke-width="1.4" stroke-dasharray="1.5 0.9"/>
<text x="16.6" y="29.3" font-family="Liberation Sans, sans-serif" font-weight="bold" font-size="9.5" fill="#fff" textLength="14.6" lengthAdjust="spacingAndGlyphs">SVG</text>
<path d="M0.3,10.2H9" stroke="#1e88e5" stroke-width="3.2"/><polygon points="8,4.6 17.8,10.2 8,15.8" fill="#1e88e5"/></svg>
<svg style="left:823.0px;top:91.6px" width="30.5" height="27.5" viewBox="0 0 30.5 27.5"><polygon points="4.6,8.6 12,1.4 29.6,1.4 22.6,8.6" fill="#f6f6f6" stroke="#444" stroke-width="0.9"/><polygon points="22.6,8.6 29.6,1.4 29.6,19.4 22.6,26.4" fill="#c9c9c9" stroke="#444" stroke-width="0.9"/>
<rect x="4.6" y="8.6" width="18" height="17.8" fill="#f0f0f0" stroke="#444" stroke-width="0.9"/>
<path d="M0.6,23 Q1.5,16 9,16 V12.4 L15.6,17.8 L9,23.2 V19.8 Q4,19.6 0.6,23Z" fill="#3a3a3a"/></svg>
<svg style="left:866.1px;top:90.9px" width="29.2" height="29" viewBox="0 0 29.2 29"><rect x="0" y="0" width="29.2" height="29" fill="#7fc6f8"/><rect x="0.4" y="0.4" width="28.4" height="28.2" fill="none" stroke="#4a9be0" stroke-width="0.8"/>
<circle cx="20.6" cy="7.6" r="3.1" fill="#fff8c4"/><path d="M0.8,19 Q6,12 9.6,13.6 Q13,15 16,21 Q20,17 23,17.6 Q26,18.4 28.4,22.6 V28.2 H0.8Z" fill="#3f8ed0"/></svg>
<svg style="left:929.0px;top:89.6px" width="32" height="32" viewBox="0 0 32 32"><rect x="0.6" y="0.6" width="27" height="20.6" fill="none" stroke="#2bb24c" stroke-width="1.1" stroke-dasharray="3.2 2"/>
<path d="M21.6,14.6V29.4L25,26.2L27.4,31.6L29.6,30.6L27.2,25.4H31.6Z" fill="#fff" stroke="#222" stroke-width="1" stroke-linejoin="round"/></svg>
<!-- frag_browser.html -->
<div class="abs" style="left:5.4px;top:149.2px;width:299.2px;height:24.8px;background:#f2f2f2;border:1px solid #c6c6c6;box-sizing:border-box"></div>
<svg style="left:10.0px;top:158.8px" width="10.4" height="6.4" viewBox="0 0 10.4 6.4"><polygon points="0,3.2 5,0 5,6.4" fill="#222"/><polygon points="5.2,3.2 10.2,0 10.2,6.4" fill="#222"/></svg>
<span class="t" style="left:30.4px;top:156.0px;font-size:11.40px;color:#555;transform:scaleX(0.8692);transform-origin:0 0;">BROWSER</span>
<svg style="left:284.2px;top:157.2px" width="9" height="9" viewBox="0 0 9 9"><circle cx="4.5" cy="4.5" r="4.5" fill="#111"/><rect x="2" y="3.8" width="5" height="1.5" fill="#fff"/></svg>
<div class="abs" style="left:299.6px;top:156.5px;width:1.0px;height:10.5px;background:#8a8a8a"></div>
<div class="abs" style="left:301.8px;top:156.5px;width:1.2px;height:10.5px;background:#bdbdbd"></div>
<div class="abs" style="left:40.9px;top:179.1px;width:220.1px;height:19.6px;background:#efefef"></div>
<svg style="left:21.0px;top:183.6px" width="13" height="11.5" viewBox="0 0 13 11.5"><polygon points="11.7,0.8 11.7,10.8 1.2,10.8" fill="#8f8f8f" stroke="#222" stroke-width="1" stroke-linejoin="miter"/></svg>
<svg style="left:44.1px;top:185.1px" width="16" height="9" viewBox="0 0 16 9"><path d="M0.3,4.5Q4,0.3 8,0.3Q12,0.3 15.7,4.5Q12,8.7 8,8.7Q4,8.7 0.3,4.5Z" fill="#999999"/><circle cx="8" cy="4.5" r="3" fill="#efefef"/><circle cx="8" cy="4.5" r="1.7" fill="#999999"/></svg>
<div class="abs" style="left:66.2px;top:181.5px;width:169.5px;height:15.2px;background:#8c8c8c"></div>
<svg style="left:68.8px;top:181.6px" width="16.5" height="15.5" viewBox="0 0 16.5 15.5"><path d="M0.9,1.8 Q0.9,0.5 2.2,0.5 L8.3,0.5 Q9.6,0.5 9.6,1.8 L9.6,6.2 L14.3,6.2 Q15.6,6.2 15.6,7.5 L15.6,13.2 Q15.6,14.5 14.3,14.5 L2.2,14.5 Q0.9,14.5 0.9,13.2Z" fill="#fafafa" stroke="#2a2a2a" stroke-width="0.95" stroke-linejoin="round"/><path d="M1.8,8.6H6.6V13.6H1.8ZM8.4,9.2H13.4V13.6H8.4ZM1.8,2.6H6.6V6.6H1.8Z" fill="#e2e2e2"/><path d="M0.9,7.7H7.5V14.5M7.5,7.7L9.6,6.2" fill="none" stroke="#2a2a2a" stroke-width="0.8"/></svg>
<span class="t" style="left:99.2px;top:183.0px;font-size:12.00px;color:#fff;font-weight:bold;transform:scaleX(0.9621);transform-origin:0 0;">walking robot &nbsp;tutor v4</span>
<svg style="left:239.7px;top:183.2px" width="13.2" height="13.2" viewBox="0 0 13.2 13.2"><circle cx="6.6" cy="6.6" r="5.9" fill="#fff" stroke="#111" stroke-width="1.1"/><circle cx="6.6" cy="6.6" r="2.6" fill="#111"/></svg>
<div class="abs" style="left:58.8px;top:203.1px;width:134.0px;height:19.6px;background:#efefef"></div>
<svg style="left:40.4px;top:207.1px" width="11" height="13" viewBox="0 0 11 13"><path d="M0.9,0.9 V12.1 L9.6,6.5Z" fill="#fff" stroke="#222" stroke-width="1.2" stroke-linejoin="round"/></svg>
<svg style="left:61.7px;top:204.8px" width="16.5" height="16.5" viewBox="0 0 16.5 16.5"><path d="M7,0h2.6l0.5,2.2l1.5,0.7l2-1.2l1.8,1.8l-1.2,2l0.7,1.5l2.2,0.5v2.6l-2.2,0.5l-0.7,1.5l1.2,2l-1.8,1.8l-2-1.2l-1.5,0.7l-0.5,2.2h-2.6l-0.5-2.2l-1.5-0.7l-2,1.2l-1.8-1.8l1.2-2l-0.7-1.5l-2.2-0.5v-2.6l2.2-0.5l0.7-1.5l-1.2-2l1.8-1.8l2,1.2l1.5-0.7z" fill="#9b9b9b" transform="scale(0.98)"/><circle cx="8.1" cy="8.1" r="2.7" fill="#efefef"/></svg>
<span class="t" style="left:92.4px;top:208.0px;font-size:11.50px;color:#333;transform:scaleX(0.9181);transform-origin:0 0;">Document Settings</span>
<div class="abs" style="left:58.8px;top:227.1px;width:109.6px;height:19.6px;background:#efefef"></div>
<svg style="left:40.4px;top:231.1px" width="11" height="13" viewBox="0 0 11 13"><path d="M0.9,0.9 V12.1 L9.6,6.5Z" fill="#fff" stroke="#222" stroke-width="1.2" stroke-linejoin="round"/></svg>
<svg style="left:61.8px;top:230.7px" width="16.5" height="12.5" viewBox="0 0 16.5 12.5"><path d="M0,0.4H6.2L7.6,2.2H16.5V12.5H0Z" fill="#9b9b9b"/><path d="M0,3H16.5" stroke="#b9b9b9" stroke-width="0.7"/></svg>
<span class="t" style="left:92.4px;top:232.0px;font-size:11.50px;color:#333;transform:scaleX(0.9528);transform-origin:0 0;">Named Views</span>
<div class="abs" style="left:58.8px;top:251.1px;width:95.1px;height:19.6px;background:#efefef"></div>
<svg style="left:40.4px;top:255.1px" width="11" height="13" viewBox="0 0 11 13"><path d="M0.9,0.9 V12.1 L9.6,6.5Z" fill="#fff" stroke="#222" stroke-width="1.2" stroke-linejoin="round"/></svg>
<svg style="left:62.3px;top:255.5px" width="16" height="11" viewBox="0 0 16 11"><path d="M0.8,5.5Q4,1.8 8,1.8Q12,1.8 15.2,5.5Q12,9.2 8,9.2Q4,9.2 0.8,5.5Z" fill="none" stroke="#d9d9d9" stroke-width="1.2"/><circle cx="8" cy="5.5" r="2" fill="#d9d9d9"/><path d="M2.5,0.5L13.5,10.5" stroke="#d9d9d9" stroke-width="1.3"/></svg>
<svg style="left:86.9px;top:254.7px" width="16.5" height="12.5" viewBox="0 0 16.5 12.5"><path d="M0,0.4H6.2L7.6,2.2H16.5V12.5H0Z" fill="#9b9b9b"/><path d="M0,3H16.5" stroke="#b9b9b9" stroke-width="0.7"/></svg>
<span class="t" style="left:117.2px;top:256.0px;font-size:11.50px;color:#333;transform:scaleX(0.8932);transform-origin:0 0;">Origin</span>
<div class="abs" style="left:58.8px;top:275.1px;width:95.1px;height:19.6px;background:#efefef"></div>
<svg style="left:40.4px;top:279.1px" width="11" height="13" viewBox="0 0 11 13"><path d="M0.9,0.9 V12.1 L9.6,6.5Z" fill="#fff" stroke="#222" stroke-width="1.2" stroke-linejoin="round"/></svg>
<svg style="left:62.3px;top:279.5px" width="16" height="11" viewBox="0 0 16 11"><path d="M0.8,5.5Q4,1.8 8,1.8Q12,1.8 15.2,5.5Q12,9.2 8,9.2Q4,9.2 0.8,5.5Z" fill="none" stroke="#d9d9d9" stroke-width="1.2"/><circle cx="8" cy="5.5" r="2" fill="#d9d9d9"/><path d="M2.5,0.5L13.5,10.5" stroke="#d9d9d9" stroke-width="1.3"/></svg>
<svg style="left:86.9px;top:278.7px" width="16.5" height="12.5" viewBox="0 0 16.5 12.5"><path d="M0,0.4H6.2L7.6,2.2H16.5V12.5H0Z" fill="#9b9b9b"/><path d="M0,3H16.5" stroke="#b9b9b9" stroke-width="0.7"/></svg>
<span class="t" style="left:117.2px;top:280.0px;font-size:11.50px;color:#333;transform:scaleX(0.9054);transform-origin:0 0;">Joints</span>
<div class="abs" style="left:58.8px;top:299.1px;width:98.9px;height:19.6px;background:#efefef"></div>
<svg style="left:40.4px;top:303.1px" width="11" height="13" viewBox="0 0 11 13"><path d="M0.9,0.9 V12.1 L9.6,6.5Z" fill="#fff" stroke="#222" stroke-width="1.2" stroke-linejoin="round"/></svg>
<svg style="left:62.3px;top:304.7px" width="16" height="9" viewBox="0 0 16 9"><path d="M0.3,4.5Q4,0.3 8,0.3Q12,0.3 15.7,4.5Q12,8.7 8,8.7Q4,8.7 0.3,4.5Z" fill="#999999"/><circle cx="8" cy="4.5" r="3" fill="#efefef"/><circle cx="8" cy="4.5" r="1.7" fill="#999999"/></svg>
<svg style="left:86.6px;top:301.1px" width="16.5" height="16" viewBox="0 0 16.5 16"><path d="M0.6,5.2 L4.4,0.9 Q4.9,0.5 5.6,0.5 L14.6,0.5 Q15.9,0.6 15.9,1.9 L15.9,10.6 L12,15 Q11.5,15.5 10.8,15.5 L1.9,15.5 Q0.6,15.4 0.6,14.1Z" fill="#f3f3f3" stroke="#333" stroke-width="0.9" stroke-linejoin="round"/><rect x="1.6" y="5.4" width="10.2" height="9.2" rx="1" fill="#dcdcdc"/><path d="M0.8,5 L11,5 Q12.2,5.1 12.2,6.3 L12.2,15.2 M12,5.4 L15.6,1.2" fill="none" stroke="#333" stroke-width="0.7"/></svg>
<span class="t" style="left:117.2px;top:304.0px;font-size:11.50px;color:#333;transform:scaleX(0.9210);transform-origin:0 0;">base:1</span>
<div class="abs" style="left:58.8px;top:323.1px;width:168.0px;height:19.6px;background:#efefef"></div>
<svg style="left:40.4px;top:327.1px" width="11" height="13" viewBox="0 0 11 13"><path d="M0.9,0.9 V12.1 L9.6,6.5Z" fill="#fff" stroke="#222" stroke-width="1.2" stroke-linejoin="round"/></svg>
<svg style="left:62.3px;top:328.7px" width="16" height="9" viewBox="0 0 16 9"><path d="M0.3,4.5Q4,0.3 8,0.3Q12,0.3 15.7,4.5Q12,8.7 8,8.7Q4,8.7 0.3,4.5Z" fill="#999999"/><circle cx="8" cy="4.5" r="3" fill="#efefef"/><circle cx="8" cy="4.5" r="1.7" fill="#999999"/></svg>
<svg style="left:86.6px;top:325.3px" width="16.5" height="15.5" viewBox="0 0 16.5 15.5"><path d="M0.9,1.8 Q0.9,0.5 2.2,0.5 L8.3,0.5 Q9.6,0.5 9.6,1.8 L9.6,6.2 L14.3,6.2 Q15.6,6.2 15.6,7.5 L15.6,13.2 Q15.6,14.5 14.3,14.5 L2.2,14.5 Q0.9,14.5 0.9,13.2Z" fill="#f4f4f4" stroke="#333" stroke-width="0.95" stroke-linejoin="round"/><path d="M1.8,8.6H6.6V13.6H1.8ZM8.4,9.2H13.4V13.6H8.4ZM1.8,2.6H6.6V6.6H1.8Z" fill="#e2e2e2"/><path d="M0.9,7.7H7.5V14.5M7.5,7.7L9.6,6.2" fill="none" stroke="#333" stroke-width="0.8"/></svg>
<svg style="left:113.0px;top:327.4px" width="14" height="10" viewBox="0 0 14 10"><path d="M0.2,9.4 Q1,3.4 8,3.3 V0.4 L13.6,5 L8,9.6 V6.7 Q3.4,6.5 0.2,9.4Z" fill="#333"/></svg>
<span class="t" style="left:142.3px;top:328.0px;font-size:11.50px;color:#333;transform:scaleX(0.9345);transform-origin:0 0;">70093 v55 v3:1</span>
<div class="abs" style="left:58.8px;top:347.1px;width:184.1px;height:19.6px;background:#efefef"></div>
<svg style="left:40.4px;top:351.1px" width="11" height="13" viewBox="0 0 11 13"><path d="M0.9,0.9 V12.1 L9.6,6.5Z" fill="#fff" stroke="#222" stroke-width="1.2" stroke-linejoin="round"/></svg>
<svg style="left:62.3px;top:352.7px" width="16" height="9" viewBox="0 0 16 9"><path d="M0.3,4.5Q4,0.3 8,0.3Q12,0.3 15.7,4.5Q12,8.7 8,8.7Q4,8.7 0.3,4.5Z" fill="#999999"/><circle cx="8" cy="4.5" r="3" fill="#efefef"/><circle cx="8" cy="4.5" r="1.7" fill="#999999"/></svg>
<svg style="left:86.6px;top:349.3px" width="16.5" height="15.5" viewBox="0 0 16.5 15.5"><path d="M0.9,1.8 Q0.9,0.5 2.2,0.5 L8.3,0.5 Q9.6,0.5 9.6,1.8 L9.6,6.2 L14.3,6.2 Q15.6,6.2 15.6,7.5 L15.6,13.2 Q15.6,14.5 14.3,14.5 L2.2,14.5 Q0.9,14.5 0.9,13.2Z" fill="#f4f4f4" stroke="#333" stroke-width="0.95" stroke-linejoin="round"/><path d="M1.8,8.6H6.6V13.6H1.8ZM8.4,9.2H13.4V13.6H8.4ZM1.8,2.6H6.6V6.6H1.8Z" fill="#e2e2e2"/><path d="M0.9,7.7H7.5V14.5M7.5,7.7L9.6,6.2" fill="none" stroke="#333" stroke-width="0.8"/></svg>
<svg style="left:113.0px;top:351.4px" width="14" height="10" viewBox="0 0 14 10"><path d="M0.2,9.4 Q1,3.4 8,3.3 V0.4 L13.6,5 L8,9.6 V6.7 Q3.4,6.5 0.2,9.4Z" fill="#333"/></svg>
<span class="t" style="left:142.3px;top:352.0px;font-size:11.50px;color:#333;transform:scaleX(0.9447);transform-origin:0 0;">70093 v55 v3 (1):1</span>
<div class="abs" style="left:58.8px;top:371.1px;width:122.9px;height:19.6px;background:#efefef"></div>
<svg style="left:40.4px;top:375.1px" width="11" height="13" viewBox="0 0 11 13"><path d="M0.9,0.9 V12.1 L9.6,6.5Z" fill="#fff" stroke="#222" stroke-width="1.2" stroke-linejoin="round"/></svg>
<svg style="left:62.3px;top:376.7px" width="16" height="9" viewBox="0 0 16 9"><path d="M0.3,4.5Q4,0.3 8,0.3Q12,0.3 15.7,4.5Q12,8.7 8,8.7Q4,8.7 0.3,4.5Z" fill="#999999"/><circle cx="8" cy="4.5" r="3" fill="#efefef"/><circle cx="8" cy="4.5" r="1.7" fill="#999999"/></svg>
<svg style="left:86.6px;top:373.1px" width="16.5" height="16" viewBox="0 0 16.5 16"><path d="M0.8,6 Q1.5,1.6 5,0.8 Q8,0.2 10.4,2.2 L16,6.2 L10.8,9.8 Q8,8 5.6,9.4 L1,15.2Z" fill="#6f9fdc" stroke="#2d5fa8" stroke-width="0.8" stroke-linejoin="round"/><path d="M1.2,9.6 L5.6,9.4 L1.4,14.6Z" fill="#9a9a9a" stroke="#555" stroke-width="0.5"/><path d="M2,5.5 Q4,2 8.6,2.6" stroke="#b7d1f2" stroke-width="1" fill="none"/></svg>
<span class="t" style="left:117.2px;top:376.0px;font-size:11.50px;color:#333;transform:scaleX(0.9437);transform-origin:0 0;">L support:1</span>
<div class="abs" style="left:58.8px;top:395.1px;width:176.0px;height:19.6px;background:#efefef"></div>
<svg style="left:40.4px;top:399.1px" width="11" height="13" viewBox="0 0 11 13"><path d="M0.9,0.9 V12.1 L9.6,6.5Z" fill="#fff" stroke="#222" stroke-width="1.2" stroke-linejoin="round"/></svg>
<svg style="left:62.3px;top:400.7px" width="16" height="9" viewBox="0 0 16 9"><path d="M0.3,4.5Q4,0.3 8,0.3Q12,0.3 15.7,4.5Q12,8.7 8,8.7Q4,8.7 0.3,4.5Z" fill="#999999"/><circle cx="8" cy="4.5" r="3" fill="#efefef"/><circle cx="8" cy="4.5" r="1.7" fill="#999999"/></svg>
<svg style="left:86.6px;top:397.1px" width="16.5" height="16" viewBox="0 0 16.5 16"><path d="M0.6,5.2 L4.4,0.9 Q4.9,0.5 5.6,0.5 L14.6,0.5 Q15.9,0.6 15.9,1.9 L15.9,10.6 L12,15 Q11.5,15.5 10.8,15.5 L1.9,15.5 Q0.6,15.4 0.6,14.1Z" fill="#f3f3f3" stroke="#333" stroke-width="0.9" stroke-linejoin="round"/><rect x="1.6" y="5.4" width="10.2" height="9.2" rx="1" fill="#dcdcdc"/><path d="M0.8,5 L11,5 Q12.2,5.1 12.2,6.3 L12.2,15.2 M12,5.4 L15.6,1.2" fill="none" stroke="#333" stroke-width="0.7"/></svg>
<svg style="left:113.0px;top:399.4px" width="14" height="10" viewBox="0 0 14 10"><path d="M0.2,9.4 Q1,3.4 8,3.3 V0.4 L13.6,5 L8,9.6 V6.7 Q3.4,6.5 0.2,9.4Z" fill="#333"/></svg>
<span class="t" style="left:142.3px;top:400.0px;font-size:11.50px;color:#333;transform:scaleX(0.9310);transform-origin:0 0;">tamiya crank v1:1</span>
<div class="abs" style="left:58.8px;top:419.1px;width:179.9px;height:19.6px;background:#efefef"></div>
<svg style="left:40.4px;top:423.1px" width="11" height="13" viewBox="0 0 11 13"><path d="M0.9,0.9 V12.1 L9.6,6.5Z" fill="#fff" stroke="#222" stroke-width="1.2" stroke-linejoin="round"/></svg>
<svg style="left:62.3px;top:424.7px" width="16" height="9" viewBox="0 0 16 9"><path d="M0.3,4.5Q4,0.3 8,0.3Q12,0.3 15.7,4.5Q12,8.7 8,8.7Q4,8.7 0.3,4.5Z" fill="#999999"/><circle cx="8" cy="4.5" r="3" fill="#efefef"/><circle cx="8" cy="4.5" r="1.7" fill="#999999"/></svg>
<svg style="left:86.6px;top:421.1px" width="16.5" height="16" viewBox="0 0 16.5 16"><path d="M0.6,5.2 L4.4,0.9 Q4.9,0.5 5.6,0.5 L14.6,0.5 Q15.9,0.6 15.9,1.9 L15.9,10.6 L12,15 Q11.5,15.5 10.8,15.5 L1.9,15.5 Q0.6,15.4 0.6,14.1Z" fill="#f3f3f3" stroke="#333" stroke-width="0.9" stroke-linejoin="round"/><rect x="1.6" y="5.4" width="10.2" height="9.2" rx="1" fill="#dcdcdc"/><path d="M0.8,5 L11,5 Q12.2,5.1 12.2,6.3 L12.2,15.2 M12,5.4 L15.6,1.2" fill="none" stroke="#333" stroke-width="0.7"/></svg>
<svg style="left:113.0px;top:423.4px" width="14" height="10" viewBox="0 0 14 10"><path d="M0.2,9.4 Q1,3.4 8,3.3 V0.4 L13.6,5 L8,9.6 V6.7 Q3.4,6.5 0.2,9.4Z" fill="#333"/></svg>
<span class="t" style="left:142.3px;top:424.0px;font-size:11.50px;color:#333;transform:scaleX(0.9399);transform-origin:0 0;">tamiya crank v1:2</span>
<div class="abs" style="left:58.8px;top:443.1px;width:95.0px;height:19.6px;background:#efefef"></div>
<svg style="left:40.4px;top:447.1px" width="11" height="13" viewBox="0 0 11 13"><path d="M0.9,0.9 V12.1 L9.6,6.5Z" fill="#fff" stroke="#222" stroke-width="1.2" stroke-linejoin="round"/></svg>
<svg style="left:62.3px;top:448.7px" width="16" height="9" viewBox="0 0 16 9"><path d="M0.3,4.5Q4,0.3 8,0.3Q12,0.3 15.7,4.5Q12,8.7 8,8.7Q4,8.7 0.3,4.5Z" fill="#999999"/><circle cx="8" cy="4.5" r="3" fill="#efefef"/><circle cx="8" cy="4.5" r="1.7" fill="#999999"/></svg>
<svg style="left:86.6px;top:445.3px" width="16.5" height="15.5" viewBox="0 0 16.5 15.5"><path d="M0.9,1.8 Q0.9,0.5 2.2,0.5 L8.3,0.5 Q9.6,0.5 9.6,1.8 L9.6,6.2 L14.3,6.2 Q15.6,6.2 15.6,7.5 L15.6,13.2 Q15.6,14.5 14.3,14.5 L2.2,14.5 Q0.9,14.5 0.9,13.2Z" fill="#f4f4f4" stroke="#333" stroke-width="0.95" stroke-linejoin="round"/><path d="M1.8,8.6H6.6V13.6H1.8ZM8.4,9.2H13.4V13.6H8.4ZM1.8,2.6H6.6V6.6H1.8Z" fill="#e2e2e2"/><path d="M0.9,7.7H7.5V14.5M7.5,7.7L9.6,6.2" fill="none" stroke="#333" stroke-width="0.8"/></svg>
<span class="t" style="left:117.2px;top:448.0px;font-size:11.50px;color:#333;transform:scaleX(0.9124);transform-origin:0 0;">legs:1</span>
<div class="abs" style="left:58.8px;top:467.1px;width:98.9px;height:19.6px;background:#efefef"></div>
<svg style="left:40.4px;top:471.1px" width="11" height="13" viewBox="0 0 11 13"><path d="M0.9,0.9 V12.1 L9.6,6.5Z" fill="#fff" stroke="#222" stroke-width="1.2" stroke-linejoin="round"/></svg>
<svg style="left:62.3px;top:472.7px" width="16" height="9" viewBox="0 0 16 9"><path d="M0.3,4.5Q4,0.3 8,0.3Q12,0.3 15.7,4.5Q12,8.7 8,8.7Q4,8.7 0.3,4.5Z" fill="#999999"/><circle cx="8" cy="4.5" r="3" fill="#efefef"/><circle cx="8" cy="4.5" r="1.7" fill="#999999"/></svg>
<svg style="left:86.6px;top:469.3px" width="16.5" height="15.5" viewBox="0 0 16.5 15.5"><path d="M0.9,1.8 Q0.9,0.5 2.2,0.5 L8.3,0.5 Q9.6,0.5 9.6,1.8 L9.6,6.2 L14.3,6.2 Q15.6,6.2 15.6,7.5 L15.6,13.2 Q15.6,14.5 14.3,14.5 L2.2,14.5 Q0.9,14.5 0.9,13.2Z" fill="#f4f4f4" stroke="#333" stroke-width="0.95" stroke-linejoin="round"/><path d="M1.8,8.6H6.6V13.6H1.8ZM8.4,9.2H13.4V13.6H8.4ZM1.8,2.6H6.6V6.6H1.8Z" fill="#e2e2e2"/><path d="M0.9,7.7H7.5V14.5M7.5,7.7L9.6,6.2" fill="none" stroke="#333" stroke-width="0.8"/></svg>
<span class="t" style="left:117.2px;top:472.0px;font-size:11.50px;color:#333;transform:scaleX(0.9320);transform-origin:0 0;">legs:2</span>
<div class="abs" style="left:5.0px;top:967.0px;width:300.0px;height:24.5px;background:#f2f2f2;border:1px solid #c6c6c6;border-top-color:#e6e6e6;box-sizing:border-box"></div>
<span class="t" style="left:30.2px;top:974.0px;font-size:11.40px;color:#555;transform:scaleX(0.8542);transform-origin:0 0;">COMMENTS</span>
<svg style="left:284.0px;top:974.5px" width="9" height="9" viewBox="0 0 9 9"><circle cx="4.5" cy="4.5" r="4.5" fill="#111"/><path d="M2,4.5H7M4.5,2V7" stroke="#fff" stroke-width="1.4"/></svg>
<div class="abs" style="left:299.6px;top:973.5px;width:1.0px;height:10.5px;background:#8a8a8a"></div>
<div class="abs" style="left:301.8px;top:973.5px;width:1.2px;height:10.5px;background:#bdbdbd"></div>
<!-- frag_dialog.html -->
<div class="abs" style="left:821.2px;top:269.3px;width:275.4px;height:471.2px;background:#f2f2f2"></div>
<div class="abs" style="left:821.2px;top:293.0px;width:275.4px;height:1.0px;background:#dadada"></div>
<div class="abs" style="left:823.2px;top:277.0px;width:1.0px;height:10.5px;background:#8a8a8a"></div>
<div class="abs" style="left:825.2px;top:277.0px;width:1.0px;height:10.5px;background:#bdbdbd"></div>
<svg style="left:832.7px;top:276.6px" width="9.6" height="9.6" viewBox="0 0 9.6 9.6"><circle cx="4.8" cy="4.8" r="4.8" fill="#111"/><rect x="2.1" y="4" width="5.4" height="1.6" fill="#fff"/></svg>
<span class="t" style="left:846.2px;top:276.0px;font-size:11.40px;color:#555;transform:scaleX(0.8293);transform-origin:0 0;">EDIT JOINT</span>
<svg style="left:1081.7px;top:278.9px" width="10" height="5.8" viewBox="0 0 10 5.8"><polygon points="0,0 4.6,2.9 0,5.8" fill="#222"/><polygon points="5,0 9.6,2.9 5,5.8" fill="#222"/></svg>
<div class="abs" style="left:875.0px;top:321.0px;width:221.6px;height:1.0px;background:#c9c9c9"></div>
<div class="abs" style="left:822.5px;top:296.5px;width:53.0px;height:25.5px;border:1px solid #c9c9c9;border-bottom:none;box-sizing:border-box;background:#f2f2f2"></div>
<div class="abs" style="left:922.3px;top:296.8px;width:1.0px;height:24.2px;background:#c9c9c9"></div>
<span class="t" style="left:829.4px;top:302.0px;font-size:12.00px;color:#333;transform:scaleX(0.8503);transform-origin:0 0;">Position</span>
<span class="t" style="left:882.2px;top:302.0px;font-size:12.00px;color:#333;transform:scaleX(0.8412);transform-origin:0 0;">Motion</span>
<svg style="left:827.2px;top:335.3px" width="8.6" height="6.3" viewBox="0 0 8.6 6.3"><polygon points="0,0 8.6,0 4.3,6.3" fill="#222"/></svg>
<span class="t" style="left:839.6px;top:332.0px;font-size:12.00px;color:#333;font-weight:bold;transform:scaleX(0.9384);transform-origin:0 0;">Component 1 - leg1:1</span>
<span class="t" style="left:834.5px;top:362.0px;font-size:12.00px;color:#333;transform:scaleX(0.8461);transform-origin:0 0;">Mode</span>
<div class="abs" style="left:889.4px;top:354.7px;width:23.3px;height:26.6px;background:#0696d7"></div>
<svg style="left:893.6px;top:360.5px" width="15.6" height="15.6" viewBox="0 0 15.6 15.6"><circle cx="7.8" cy="7.8" r="7" fill="#fff"/><path d="M1,8.2A6.8,6.8 0 0 0 14.6,8.2Z" fill="#2a9be0"/><circle cx="7.8" cy="7.8" r="7" fill="none" stroke="#111" stroke-width="1.4"/></svg>
<svg style="left:921.6px;top:360.1px" width="16.6" height="16.6" viewBox="0 0 16.6 16.6"><rect x="0.5" y="0.5" width="10.2" height="10.2" fill="#cfcfcf" stroke="#555" stroke-width="1"/><rect x="6" y="6" width="10" height="10" fill="#e4e4e4" stroke="#444" stroke-width="1"/><circle cx="8.3" cy="8.3" r="3.2" fill="#bdbdbd"/></svg>
<svg style="left:950.6px;top:360.3px" width="17" height="14.4" viewBox="0 0 17 14.4"><path d="M0.3,9.3H3.4" stroke="#333" stroke-width="1.1"/><circle cx="8.4" cy="9.8" r="3.6" fill="#e8e8e8" stroke="#555" stroke-width="0.9"/><path d="M6.6,10.2H10.2" stroke="#555" stroke-width="1"/><path d="M10.6,6.8L15.6,0.4" stroke="#333" stroke-width="1"/></svg>
<span class="t" style="left:834.5px;top:392.0px;font-size:12.00px;color:#333;transform:scaleX(0.8706);transform-origin:0 0;">Snap</span>
<div class="abs" style="left:889.4px;top:384.1px;width:78.0px;height:27.2px;background:#fff;border:1px solid #d4d4d4;border-radius:2px;box-sizing:border-box"></div>
<svg style="left:897.0px;top:389.4px" width="10.4" height="16.6" viewBox="0 0 10.4 16.6"><path d="M0.7,0.8V12.8L3.6,10.2L5.8,15.6L8,14.7L5.8,9.5H9.6Z" fill="#fff" stroke="#222" stroke-width="0.9" stroke-linejoin="round"/></svg>
<span class="t" style="left:912.0px;top:392.0px;font-size:12.00px;color:#333;transform:scaleX(0.8866);transform-origin:0 0;">1 selected</span>
<svg style="left:978.0px;top:393.8px" width="9.8" height="9" viewBox="0 0 9.8 9"><path d="M0.9,0.7L8.9,8.3M8.9,0.7L0.9,8.3" stroke="#333" stroke-width="1.9" fill="none"/></svg>
<div class="abs" style="left:823.0px;top:418.0px;width:260.0px;height:2.8px;background:#c8c8c8"></div>
<svg style="left:827.2px;top:435.3px" width="8.6" height="6.3" viewBox="0 0 8.6 6.3"><polygon points="0,0 8.6,0 4.3,6.3" fill="#222"/></svg>
<span class="t" style="left:839.6px;top:432.0px;font-size:12.00px;color:#333;font-weight:bold;transform:scaleX(0.9529);transform-origin:0 0;">Component 2 - L support:1</span>
<span class="t" style="left:834.5px;top:462.0px;font-size:12.00px;color:#333;transform:scaleX(0.8461);transform-origin:0 0;">Mode</span>
<div class="abs" style="left:889.4px;top:454.7px;width:23.3px;height:26.6px;background:#0696d7"></div>
<svg style="left:893.6px;top:460.5px" width="15.6" height="15.6" viewBox="0 0 15.6 15.6"><circle cx="7.8" cy="7.8" r="7" fill="#fff"/><path d="M1,8.2A6.8,6.8 0 0 0 14.6,8.2Z" fill="#2a9be0"/><circle cx="7.8" cy="7.8" r="7" fill="none" stroke="#111" stroke-width="1.4"/></svg>
<svg style="left:921.6px;top:460.1px" width="16.6" height="16.6" viewBox="0 0 16.6 16.6"><rect x="0.5" y="0.5" width="10.2" height="10.2" fill="#cfcfcf" stroke="#555" stroke-width="1"/><rect x="6" y="6" width="10" height="10" fill="#e4e4e4" stroke="#444" stroke-width="1"/><circle cx="8.3" cy="8.3" r="3.2" fill="#bdbdbd"/></svg>
<svg style="left:950.6px;top:460.3px" width="17" height="14.4" viewBox="0 0 17 14.4"><path d="M0.3,9.3H3.4" stroke="#333" stroke-width="1.1"/><circle cx="8.4" cy="9.8" r="3.6" fill="#e8e8e8" stroke="#555" stroke-width="0.9"/><path d="M6.6,10.2H10.2" stroke="#555" stroke-width="1"/><path d="M10.6,6.8L15.6,0.4" stroke="#333" stroke-width="1"/></svg>
<span class="t" style="left:834.5px;top:492.0px;font-size:12.00px;color:#333;transform:scaleX(0.8706);transform-origin:0 0;">Snap</span>
<div class="abs" style="left:889.4px;top:484.1px;width:78.0px;height:27.2px;background:#fff;border:1px solid #d4d4d4;border-radius:2px;box-sizing:border-box"></div>
<svg style="left:897.0px;top:489.4px" width="10.4" height="16.6" viewBox="0 0 10.4 16.6"><path d="M0.7,0.8V12.8L3.6,10.2L5.8,15.6L8,14.7L5.8,9.5H9.6Z" fill="#fff" stroke="#222" stroke-width="0.9" stroke-linejoin="round"/></svg>
<span class="t" style="left:912.0px;top:492.0px;font-size:12.00px;color:#333;transform:scaleX(0.8866);transform-origin:0 0;">1 selected</span>
<svg style="left:978.0px;top:493.8px" width="9.8" height="9" viewBox="0 0 9.8 9"><path d="M0.9,0.7L8.9,8.3M8.9,0.7L0.9,8.3" stroke="#333" stroke-width="1.9" fill="none"/></svg>
<div class="abs" style="left:823.0px;top:518.0px;width:260.0px;height:2.8px;background:#c8c8c8"></div>
<svg style="left:831.3px;top:535.3px" width="8.6" height="6.3" viewBox="0 0 8.6 6.3"><polygon points="0,0 8.6,0 4.3,6.3" fill="#222"/></svg>
<span class="t" style="left:846.2px;top:532.0px;font-size:12.00px;color:#333;font-weight:bold;transform:scaleX(0.9577);transform-origin:0 0;">Joint Alignment</span>
<div class="abs" style="left:890.0px;top:555.5px;width:174.0px;height:25.2px;background:#fff;border:1px solid #bdbdbd;box-sizing:border-box"></div>
<span class="t" style="left:834.5px;top:562.0px;font-size:12.00px;color:#333;transform:scaleX(0.8764);transform-origin:0 0;">Angle</span>
<span class="t" style="left:893.7px;top:562.0px;font-size:12.00px;color:#333;transform:scaleX(0.8860);transform-origin:0 0;">180.0 deg</span>
<div class="abs" style="left:890.0px;top:585.5px;width:174.0px;height:25.2px;background:#fff;border:1px solid #bdbdbd;box-sizing:border-box"></div>
<span class="t" style="left:834.5px;top:592.0px;font-size:12.00px;color:#333;transform:scaleX(0.9297);transform-origin:0 0;">Offset X</span>
<span class="t" style="left:893.7px;top:592.0px;font-size:12.00px;color:#333;transform:scaleX(0.8419);transform-origin:0 0;">0.00 mm</span>
<div class="abs" style="left:890.0px;top:615.5px;width:174.0px;height:25.2px;background:#fff;border:1px solid #bdbdbd;box-sizing:border-box"></div>
<span class="t" style="left:834.5px;top:622.0px;font-size:12.00px;color:#333;transform:scaleX(0.9344);transform-origin:0 0;">Offset Y</span>
<span class="t" style="left:893.7px;top:622.0px;font-size:12.00px;color:#333;transform:scaleX(0.8419);transform-origin:0 0;">0.00 mm</span>
<div class="abs" style="left:890.0px;top:645.5px;width:174.0px;height:25.2px;background:#fff;border:1px solid #bdbdbd;box-sizing:border-box"></div>
<span class="t" style="left:834.5px;top:652.0px;font-size:12.00px;color:#333;transform:scaleX(0.9445);transform-origin:0 0;">Offset Z</span>
<span class="t" style="left:893.7px;top:652.0px;font-size:12.00px;color:#333;transform:scaleX(0.8419);transform-origin:0 0;">0.00 mm</span>
<span class="t" style="left:834.5px;top:682.0px;font-size:12.00px;color:#333;transform:scaleX(0.8016);transform-origin:0 0;">Flip</span>
<div class="abs" style="left:889.4px;top:674.4px;width:23.3px;height:27.2px;background:#0696d7"></div>
<svg style="left:894.0px;top:680.5px" width="14" height="14" viewBox="0 0 14 14"><path d="M2.2,11.8L11.8,2.2" stroke="#111" stroke-width="1.6"/><polygon points="0.4,13.6 0.8,8 6,13.2" fill="#111"/><polygon points="13.6,0.4 13.2,6 8,0.8" fill="#111"/><path d="M3.6,1.6L11,10.4" stroke="#e0202a" stroke-width="1"/></svg>
<div class="abs" style="left:821.2px;top:704.0px;width:275.4px;height:1.0px;background:#d2d2d2"></div>
<svg style="left:830.0px;top:717.0px" width="12.2" height="12.2" viewBox="0 0 12.2 12.2"><circle cx="6.1" cy="6.1" r="6.1" fill="#111"/><rect x="5" y="2.4" width="2.3" height="2.1" fill="#fff"/><path d="M4.3,5.4H7.3V9H8V10H4.3V9H5V6.4H4.3Z" fill="#fff"/></svg>
<div class="abs" style="left:955.2px;top:713.1px;width:59.7px;height:18.5px;background:#e1e1e1;border:1px solid #adadad;box-sizing:border-box"></div>
<span class="t" style="left:976.2px;top:717.0px;font-size:12.50px;color:#444;transform:scaleX(0.9468);transform-origin:0 0;">OK</span>
<div class="abs" style="left:1025.3px;top:713.1px;width:59.4px;height:18.5px;background:#e1e1e1;border:1px solid #adadad;box-sizing:border-box"></div>
<span class="t" style="left:1035.5px;top:717.0px;font-size:12.50px;color:#444;transform:scaleX(0.9792);transform-origin:0 0;">Cancel</span>
<div class="abs" style="left:694.4px;top:658.4px;width:141.4px;height:21.6px;background:#f2f2f2"></div>
<svg style="left:695.5px;top:659.5px" width="11" height="19.5" viewBox="0 0 11 19.5"><path d="M3,1V19M6,1V19M9,1V19" stroke="#dcdcdc" stroke-width="1" stroke-dasharray="1 1"/></svg>
<div class="abs" style="left:707.5px;top:658.4px;width:1.0px;height:21.6px;background:#dedede"></div>
<svg style="left:716.2px;top:660.6px" width="14" height="17" viewBox="0 0 14 17"><path d="M3.2,1.2V9.5" stroke="#0a9a2a" stroke-width="1"/><polygon points="3.2,1 7,3 3.2,5" fill="#0a9a2a"/><ellipse cx="3.6" cy="11.6" rx="2.7" ry="4.2" fill="none" stroke="#5a6a00" stroke-width="0.8"/><rect x="2.5" y="9.8" width="2.3" height="3.6" fill="#0a9a2a"/><polygon points="8.6,8.8 12.8,11.4 8.6,14" fill="#0a9a2a"/></svg>
<svg style="left:732.3px;top:667.0px" width="6.2" height="3.8" viewBox="0 0 6.2 3.8"><polygon points="0,0 6.2,0 3.1,3.8" fill="#111"/></svg>
<div class="abs" style="left:744.1px;top:659.3px;width:68.8px;height:19.2px;background:#fff;border:1px solid #c4c4c4;box-sizing:border-box"></div>
<div class="abs" style="left:754.0px;top:662.2px;width:48.4px;height:13.8px;background:#0078d7"></div>
<div class="abs" style="left:802.4px;top:662.2px;width:1.0px;height:13.8px;background:#111"></div>
<span class="t" style="left:755.0px;top:663.0px;font-size:12.00px;color:#fff;transform:scaleX(0.8729);transform-origin:0 0;">180.0 deg</span>
<div class="abs" style="left:824.3px;top:663.2px;width:2.0px;height:2.0px;background:#9a9a9a;border-radius:50%"></div>
<div class="abs" style="left:824.3px;top:668.0px;width:2.0px;height:2.0px;background:#9a9a9a;border-radius:50%"></div>
<div class="abs" style="left:824.3px;top:672.8px;width:2.0px;height:2.0px;background:#9a9a9a;border-radius:50%"></div>
<div class="abs" style="left:699.2px;top:734.3px;width:166.6px;height:13.1px;background:#fff;border:1px solid #767676;box-sizing:border-box"></div>
<span class="t" style="left:703.6px;top:734.0px;font-size:13.50px;color:#000;font-family:'Liberation Serif',serif;transform:scaleX(0.8517);transform-origin:0 0;">Adjust joint alignment and motion</span>
<svg style="left:700px;top:640px;mix-blend-mode:multiply" width="46" height="52" viewBox="700 640 46 52"><path d="M712.6,648 C716,646 722,647.6 726,646.4 C730,645 734.5,645 737.4,645.8 C739.4,646.6 740.2,648.6 740.4,652 C741,657 741,664 740.9,670 C741,676 740.8,682 739.3,685.1 C737,687.2 733,686.6 729.8,686.5 C727,686 724.6,684.4 722.1,684.4 C719,684.6 715.6,686.2 712.6,685.1 C709.4,684 707.4,681.6 706.9,678.4 C706,674.6 705.8,670 705.9,667 C706,664 706,661.4 706.9,659.3 C707.8,657.4 710,656.6 711.6,655.5 C712.6,653.6 711.6,650 712.6,648Z" fill="#f6ea00"/></svg>
<!-- frag_bottom.html -->
<div class="abs" style="left:1.0px;top:995.8px;width:1099.5px;height:2.4px;background:#f6f6f6"></div>
<div class="abs" style="left:1.0px;top:996.2px;width:575.0px;height:1.8px;background:#c9c9c9"></div>
<div class="abs" style="left:1.0px;top:998.0px;width:1099.5px;height:41.6px;background:#f2f2f2"></div>
<div class="abs" style="left:576.5px;top:998.0px;width:518.8px;height:5.6px;background:#cfcfcf;border-radius:3px"></div>
<svg style="left:580.0px;top:992.4px" width="13" height="5.8" viewBox="0 0 13 5.8"><polygon points="0,5.8 6.5,0 13,5.8" fill="#fff"/></svg>
<div class="abs" style="left:0.0px;top:1039.6px;width:1102.0px;height:7.4px;background:linear-gradient(90deg,#5e4848 0,#5e4848 34px,#3b1c1f 34.5px,#2e1417 45%,#241a18 100%)"></div>
<div class="abs" style="left:0.0px;top:1.0px;width:1.0px;height:1039.0px;background:linear-gradient(180deg,#3a3f52 0,#4a3a30 12%,#5a2522 40%,#5a2222 100%)"></div>
<svg style="left:11.8px;top:1018.8px" width="12.4" height="14.2" viewBox="0 0 12.4 14.2"><rect x="0" y="0" width="2" height="14.2" fill="#4f4f4f"/><polygon points="12.4,0 12.4,14.2 2.6,7.1" fill="#4f4f4f"/></svg>
<svg style="left:36.2px;top:1019.6px" width="13.2" height="12.6" viewBox="0 0 13.2 12.6"><polygon points="9.4,0 9.4,12.6 0,6.3" fill="#4f4f4f"/><rect x="11" y="3.4" width="2" height="5.8" fill="#4f4f4f"/></svg>
<svg style="left:62.0px;top:1018.2px" width="11.8" height="15.8" viewBox="0 0 11.8 15.8"><polygon points="0,0 11.8,7.9 0,15.8" fill="#4f4f4f"/></svg>
<svg style="left:85.8px;top:1019.6px" width="13.2" height="12.6" viewBox="0 0 13.2 12.6"><polygon points="3.8,0 3.8,12.6 13.2,6.3" fill="#4f4f4f"/><rect x="0.2" y="3.4" width="2" height="5.8" fill="#4f4f4f"/></svg>
<svg style="left:111.8px;top:1018.8px" width="12.4" height="14.2" viewBox="0 0 12.4 14.2"><rect x="10.4" y="0" width="2" height="14.2" fill="#4f4f4f"/><polygon points="0,0 0,14.2 9.8,7.1" fill="#4f4f4f"/></svg>
<svg style="left:146.9px;top:1012.8px" width="16.5" height="16" viewBox="0 0 16.5 16"><polygon points="0.3,3.2 2.2,0.8 11.8,0.4 10,3.2" fill="#9fd0f7"/><rect x="0.3" y="3.2" width="9.7" height="9.6" fill="#66aee6"/><polygon points="10,3.2 11.8,0.4 11.8,10 10,12.8" fill="#3f8fd0"/><path d="M0.3,13.4H10.2L12,11" fill="none" stroke="#bdbdbd" stroke-width="1.6"/><path d="M14.5,2V12.6" stroke="#222" stroke-width="1"/><polygon points="14.5,0.6 16,3.4 13,3.4" fill="#222"/></svg>
<svg style="left:170.8px;top:1012.8px" width="16.5" height="16" viewBox="0 0 16.5 16"><path d="M0.5,4.6 L4.3,0.6 H6.5 L7.8,1.6 V5.8 L7.2,7 L4.6,7.7 V13.1 L1.8,15.7 L0.5,14.8Z" fill="#dedede" stroke="#5e5e5e" stroke-width="1" stroke-linejoin="round"/><path d="M1.4,5.2 L2.6,4 V13.6 L1.4,14.4Z" fill="#f4f4f4"/><path d="M4.6,1.6 H6.2 L6.8,2.2 V5.6 L4.6,6.4Z" fill="#f0f0f0"/><path d="M11.7,2.3 L12.7,1.3 L15.9,4.6 V14.8 L14.5,15.7 L11.7,12.9 L9.3,12.6 L8.5,11.7 V6.3 L11.7,6.4Z" fill="#d6d6d6" stroke="#5e5e5e" stroke-width="1" stroke-linejoin="round"/><path d="M12.6,2.8 L14.9,5.2 V14 L12.6,12Z" fill="#ececec"/><path d="M5.55,8.4V11.2M10.6,4.4V7.9" stroke="#1e90ee" stroke-width="1.3" stroke-linecap="round"/></svg>
<svg style="left:194.8px;top:1012.8px" width="16.5" height="16" viewBox="0 0 16.5 16"><path d="M0.8,6 Q1.5,1.6 5,0.8 Q8,0.2 10.4,2.2 L16,6.2 L10.8,9.8 Q8,8 5.6,9.4 L1,15.2Z" fill="#7aa6e0" stroke="#2d5fa8" stroke-width="0.8" stroke-linejoin="round"/><path d="M1.2,9.6 L5.6,9.4 L1.4,14.6Z" fill="#9a9a9a" stroke="#555" stroke-width="0.5"/><path d="M2,5.5 Q4,2 8.6,2.6" stroke="#b7d1f2" stroke-width="1" fill="none"/></svg>
<svg style="left:218.8px;top:1012.8px" width="16.5" height="16" viewBox="0 0 16.5 16"><path d="M1.6,1.6H13.4V8M1.6,1.6V13.6H8" fill="none" stroke="#555" stroke-width="0.9" stroke-dasharray="9 2.4"/><rect x="0.4" y="0.4" width="2.2" height="2.2" fill="#1e88e5"/><rect x="12.4" y="0.4" width="2.2" height="2.2" fill="#1e88e5"/><rect x="0.4" y="12.6" width="2.2" height="2.2" fill="#1e88e5"/><path d="M9,13.6 L13.4,8.2 L15.6,10.2 L11.2,15.2Z" fill="#f6b73c"/><circle cx="14.8" cy="9" r="1.5" fill="#f0323c"/><polygon points="9,13.6 11.2,15.2 8.2,15.8" fill="#555"/></svg>
<svg style="left:242.7px;top:1012.8px" width="16.5" height="16" viewBox="0 0 16.5 16"><polygon points="0.6,4.6 4.4,1.2 12.4,1.2 9.6,4.6" fill="#f4f4f4" stroke="#555" stroke-width="0.9" stroke-linejoin="round"/><path d="M9.6,4.6 L12.4,1.2 Q15.6,1.4 15.7,4.4 V11.2 L12.2,15.4 V8 Q12.2,5 9.6,4.6Z" fill="#66aee6"/><path d="M12.4,1.2 Q15.6,1.4 15.7,4.4 V11.2" fill="none" stroke="#8ec6f4" stroke-width="0.8"/></svg>
<svg style="left:266.6px;top:1012.8px" width="16.5" height="16" viewBox="0 0 16.5 16"><polygon points="0.6,4.6 4.4,1.2 12.4,1.2 9.6,4.6" fill="#f4f4f4" stroke="#555" stroke-width="0.9" stroke-linejoin="round"/><path d="M9.6,4.6 L12.4,1.2 Q15.6,1.4 15.7,4.4 V11.2 L12.2,15.4 V8 Q12.2,5 9.6,4.6Z" fill="#66aee6"/><path d="M12.4,1.2 Q15.6,1.4 15.7,4.4 V11.2" fill="none" stroke="#8ec6f4" stroke-width="0.8"/></svg>
<svg style="left:290.6px;top:1012.8px" width="16.5" height="16" viewBox="0 0 16.5 16"><polygon points="0.6,4.6 4.4,1.2 12.4,1.2 9.6,4.6" fill="#f4f4f4" stroke="#555" stroke-width="0.9" stroke-linejoin="round"/><path d="M9.6,4.6 L12.4,1.2 Q15.6,1.4 15.7,4.4 V11.2 L12.2,15.4 V8 Q12.2,5 9.6,4.6Z" fill="#66aee6"/><path d="M12.4,1.2 Q15.6,1.4 15.7,4.4 V11.2" fill="none" stroke="#8ec6f4" stroke-width="0.8"/></svg>
<svg style="left:314.6px;top:1012.8px" width="16.5" height="16" viewBox="0 0 16.5 16"><path d="M1.6,1.6H13.4V8M1.6,1.6V13.6H8" fill="none" stroke="#555" stroke-width="0.9" stroke-dasharray="9 2.4"/><rect x="0.4" y="0.4" width="2.2" height="2.2" fill="#1e88e5"/><rect x="12.4" y="0.4" width="2.2" height="2.2" fill="#1e88e5"/><rect x="0.4" y="12.6" width="2.2" height="2.2" fill="#1e88e5"/><path d="M9,13.6 L13.4,8.2 L15.6,10.2 L11.2,15.2Z" fill="#f6b73c"/><circle cx="14.8" cy="9" r="1.5" fill="#f0323c"/><polygon points="9,13.6 11.2,15.2 8.2,15.8" fill="#555"/></svg>
<svg style="left:338.5px;top:1012.8px" width="16.5" height="16" viewBox="0 0 16.5 16"><polygon points="0.3,3.2 2.2,0.8 11.8,0.4 10,3.2" fill="#9fd0f7"/><rect x="0.3" y="3.2" width="9.7" height="9.6" fill="#66aee6"/><polygon points="10,3.2 11.8,0.4 11.8,10 10,12.8" fill="#3f8fd0"/><path d="M0.3,13.4H10.2L12,11" fill="none" stroke="#bdbdbd" stroke-width="1.6"/><path d="M14.5,2V12.6" stroke="#222" stroke-width="1"/><polygon points="14.5,0.6 16,3.4 13,3.4" fill="#222"/></svg>
<svg style="left:362.4px;top:1012.8px" width="16.5" height="16" viewBox="0 0 16.5 16"><path d="M0.6,6 L3.8,1.6 Q4.6,0.8 6,0.8 H9.6 L8,4.4 Z" fill="#efefef" stroke="#555" stroke-width="0.8"/><path d="M0.6,6 H6 Q12.6,6.6 13,13 V15.4 H0.6Z" fill="#dedede" stroke="#555" stroke-width="0.9" stroke-linejoin="round"/><path d="M13,13 L16,9.4 V12.6 L13,15.4Z" fill="#bdbdbd" stroke="#555" stroke-width="0.6"/><path d="M6.6,6 L9.4,1.2 Q12.4,0.8 14.4,3.6 Q16,6 16,9.4 L13,13 Q12.6,6.6 6.6,6Z" fill="#66aee6"/></svg>
<svg style="left:386.4px;top:1012.8px" width="16.5" height="16" viewBox="0 0 16.5 16"><path d="M0.5,4.6 L4.3,0.6 H6.5 L7.8,1.6 V5.8 L7.2,7 L4.6,7.7 V13.1 L1.8,15.7 L0.5,14.8Z" fill="#dedede" stroke="#5e5e5e" stroke-width="1" stroke-linejoin="round"/><path d="M1.4,5.2 L2.6,4 V13.6 L1.4,14.4Z" fill="#f4f4f4"/><path d="M4.6,1.6 H6.2 L6.8,2.2 V5.6 L4.6,6.4Z" fill="#f0f0f0"/><path d="M11.7,2.3 L12.7,1.3 L15.9,4.6 V14.8 L14.5,15.7 L11.7,12.9 L9.3,12.6 L8.5,11.7 V6.3 L11.7,6.4Z" fill="#d6d6d6" stroke="#5e5e5e" stroke-width="1" stroke-linejoin="round"/><path d="M12.6,2.8 L14.9,5.2 V14 L12.6,12Z" fill="#ececec"/><path d="M5.55,8.4V11.2M10.6,4.4V7.9" stroke="#1e90ee" stroke-width="1.3" stroke-linecap="round"/></svg>
<svg style="left:410.4px;top:1012.8px" width="16.5" height="16" viewBox="0 0 16.5 16"><polygon points="1.6,4.6 5.6,0.8 15.6,0.8 12,4.6" fill="#f6f6f6" stroke="#333" stroke-width="0.9" stroke-linejoin="round"/><polygon points="12,4.6 15.6,0.8 15.6,11 12,15" fill="#cfcfcf" stroke="#333" stroke-width="0.9" stroke-linejoin="round"/><rect x="1.6" y="4.6" width="10.4" height="10.4" fill="#f0f0f0" stroke="#333" stroke-width="0.9"/><rect x="0.6" y="7.2" width="2" height="5" fill="#f2f2f2"/><path d="M0.6,10H7" stroke="#222" stroke-width="1.6"/><polygon points="6,7 9.6,10 6,13" fill="#222"/></svg>
<svg style="left:434.3px;top:1012.8px" width="16.5" height="16" viewBox="0 0 16.5 16"><path d="M1.6,1.6H13.4V8M1.6,1.6V13.6H8" fill="none" stroke="#555" stroke-width="0.9" stroke-dasharray="9 2.4"/><rect x="0.4" y="0.4" width="2.2" height="2.2" fill="#1e88e5"/><rect x="12.4" y="0.4" width="2.2" height="2.2" fill="#1e88e5"/><rect x="0.4" y="12.6" width="2.2" height="2.2" fill="#1e88e5"/><path d="M9,13.6 L13.4,8.2 L15.6,10.2 L11.2,15.2Z" fill="#f6b73c"/><circle cx="14.8" cy="9" r="1.5" fill="#f0323c"/><polygon points="9,13.6 11.2,15.2 8.2,15.8" fill="#555"/></svg>
<svg style="left:458.2px;top:1012.8px" width="16.5" height="16" viewBox="0 0 16.5 16"><polygon points="0.3,3.2 2.2,0.8 11.8,0.4 10,3.2" fill="#9fd0f7"/><rect x="0.3" y="3.2" width="9.7" height="9.6" fill="#66aee6"/><polygon points="10,3.2 11.8,0.4 11.8,10 10,12.8" fill="#3f8fd0"/><path d="M0.3,13.4H10.2L12,11" fill="none" stroke="#bdbdbd" stroke-width="1.6"/><path d="M14.5,2V12.6" stroke="#222" stroke-width="1"/><polygon points="14.5,0.6 16,3.4 13,3.4" fill="#222"/></svg>
<svg style="left:482.2px;top:1012.8px" width="16.5" height="16" viewBox="0 0 16.5 16"><path d="M0.6,6 L3.8,1.6 Q4.6,0.8 6,0.8 H9.6 L8,4.4 Z" fill="#efefef" stroke="#555" stroke-width="0.8"/><path d="M0.6,6 H6 Q12.6,6.6 13,13 V15.4 H0.6Z" fill="#dedede" stroke="#555" stroke-width="0.9" stroke-linejoin="round"/><path d="M13,13 L16,9.4 V12.6 L13,15.4Z" fill="#bdbdbd" stroke="#555" stroke-width="0.6"/><path d="M6.6,6 L9.4,1.2 Q12.4,0.8 14.4,3.6 Q16,6 16,9.4 L13,13 Q12.6,6.6 6.6,6Z" fill="#66aee6"/></svg>
<svg style="left:506.1px;top:1012.8px" width="16.5" height="16" viewBox="0 0 16.5 16"><path d="M0.5,4.6 L4.3,0.6 H6.5 L7.8,1.6 V5.8 L7.2,7 L4.6,7.7 V13.1 L1.8,15.7 L0.5,14.8Z" fill="#dedede" stroke="#5e5e5e" stroke-width="1" stroke-linejoin="round"/><path d="M1.4,5.2 L2.6,4 V13.6 L1.4,14.4Z" fill="#f4f4f4"/><path d="M4.6,1.6 H6.2 L6.8,2.2 V5.6 L4.6,6.4Z" fill="#f0f0f0"/><path d="M11.7,2.3 L12.7,1.3 L15.9,4.6 V14.8 L14.5,15.7 L11.7,12.9 L9.3,12.6 L8.5,11.7 V6.3 L11.7,6.4Z" fill="#d6d6d6" stroke="#5e5e5e" stroke-width="1" stroke-linejoin="round"/><path d="M12.6,2.8 L14.9,5.2 V14 L12.6,12Z" fill="#ececec"/><path d="M5.55,8.4V11.2M10.6,4.4V7.9" stroke="#1e90ee" stroke-width="1.3" stroke-linecap="round"/></svg>
<svg style="left:530.1px;top:1012.8px" width="16.5" height="16" viewBox="0 0 16.5 16"><path d="M0.6,1.6 Q0.6,0.6 1.8,0.5 L7,0.2 Q8,0.2 8,1.2 V5.6 L6.6,7.4 H1.6 Q0.6,7.4 0.6,6.4Z" fill="#dcdcdc" stroke="#666" stroke-width="0.9"/><path d="M8.8,9.6 Q8.8,8.6 10,8.5 L15.2,8.2 Q16.2,8.2 16.2,9.2 V13.6 L14.8,15.4 H9.8 Q8.8,15.4 8.8,14.4Z" fill="#dcdcdc" stroke="#666" stroke-width="0.9"/><path d="M1.6,10.2V13H5.4" fill="none" stroke="#222" stroke-width="1.1"/><polygon points="4.6,11.2 7,13 4.6,14.8" fill="#222"/></svg>
<svg style="left:554.0px;top:1012.8px" width="16.5" height="16" viewBox="0 0 16.5 16"><path d="M0.5,4.6 L4.3,0.6 H6.5 L7.8,1.6 V5.8 L7.2,7 L4.6,7.7 V13.1 L1.8,15.7 L0.5,14.8Z" fill="#dedede" stroke="#5e5e5e" stroke-width="1" stroke-linejoin="round"/><path d="M1.4,5.2 L2.6,4 V13.6 L1.4,14.4Z" fill="#f4f4f4"/><path d="M4.6,1.6 H6.2 L6.8,2.2 V5.6 L4.6,6.4Z" fill="#f0f0f0"/><path d="M11.7,2.3 L12.7,1.3 L15.9,4.6 V14.8 L14.5,15.7 L11.7,12.9 L9.3,12.6 L8.5,11.7 V6.3 L11.7,6.4Z" fill="#d6d6d6" stroke="#5e5e5e" stroke-width="1" stroke-linejoin="round"/><path d="M12.6,2.8 L14.9,5.2 V14 L12.6,12Z" fill="#ececec"/><path d="M5.55,8.4V11.2M10.6,4.4V7.9" stroke="#1e90ee" stroke-width="1.3" stroke-linecap="round"/></svg>
<svg style="left:578.0px;top:1012.8px" width="16.5" height="16" viewBox="0 0 16.5 16"><polygon points="0.6,4.4 4.2,0.8 15.8,0.8 12.2,4.4" fill="#e6e6e6" stroke="#555" stroke-width="0.9" stroke-linejoin="round"/><polygon points="12.2,4.4 15.8,0.8 15.8,11.4 12.2,15.4" fill="#bdbdbd" stroke="#555" stroke-width="0.9" stroke-linejoin="round"/><rect x="0.6" y="4.4" width="11.6" height="11" fill="#dcdcdc" stroke="#555" stroke-width="0.9"/></svg>
<svg style="left:602.0px;top:1012.8px" width="16.5" height="16" viewBox="0 0 16.5 16"><polygon points="0.6,4.4 4.2,0.8 15.8,0.8 12.2,4.4" fill="#e6e6e6" stroke="#555" stroke-width="0.9" stroke-linejoin="round"/><polygon points="12.2,4.4 15.8,0.8 15.8,11.4 12.2,15.4" fill="#bdbdbd" stroke="#555" stroke-width="0.9" stroke-linejoin="round"/><rect x="0.6" y="4.4" width="11.6" height="11" fill="#dcdcdc" stroke="#555" stroke-width="0.9"/></svg>
<svg style="left:625.9px;top:1012.8px" width="16.5" height="16" viewBox="0 0 16.5 16"><path d="M1.6,1.6H13.4V8M1.6,1.6V13.6H8" fill="none" stroke="#555" stroke-width="0.9" stroke-dasharray="9 2.4"/><rect x="0.4" y="0.4" width="2.2" height="2.2" fill="#1e88e5"/><rect x="12.4" y="0.4" width="2.2" height="2.2" fill="#1e88e5"/><rect x="0.4" y="12.6" width="2.2" height="2.2" fill="#1e88e5"/><path d="M9,13.6 L13.4,8.2 L15.6,10.2 L11.2,15.2Z" fill="#f6b73c"/><circle cx="14.8" cy="9" r="1.5" fill="#f0323c"/><polygon points="9,13.6 11.2,15.2 8.2,15.8" fill="#555"/></svg>
<svg style="left:649.9px;top:1012.8px" width="16.5" height="16" viewBox="0 0 16.5 16"><polygon points="0.3,3.2 2.2,0.8 11.8,0.4 10,3.2" fill="#9fd0f7"/><rect x="0.3" y="3.2" width="9.7" height="9.6" fill="#66aee6"/><polygon points="10,3.2 11.8,0.4 11.8,10 10,12.8" fill="#3f8fd0"/><path d="M0.3,13.4H10.2L12,11" fill="none" stroke="#bdbdbd" stroke-width="1.6"/><path d="M14.5,2V12.6" stroke="#222" stroke-width="1"/><polygon points="14.5,0.6 16,3.4 13,3.4" fill="#222"/></svg>
<svg style="left:673.8px;top:1012.8px" width="16.5" height="16" viewBox="0 0 16.5 16"><path d="M0.6,6 L3.8,1.6 Q4.6,0.8 6,0.8 H9.6 L8,4.4 Z" fill="#efefef" stroke="#555" stroke-width="0.8"/><path d="M0.6,6 H6 Q12.6,6.6 13,13 V15.4 H0.6Z" fill="#dedede" stroke="#555" stroke-width="0.9" stroke-linejoin="round"/><path d="M13,13 L16,9.4 V12.6 L13,15.4Z" fill="#bdbdbd" stroke="#555" stroke-width="0.6"/><path d="M6.6,6 L9.4,1.2 Q12.4,0.8 14.4,3.6 Q16,6 16,9.4 L13,13 Q12.6,6.6 6.6,6Z" fill="#66aee6"/></svg>
<svg style="left:697.8px;top:1012.8px" width="16.5" height="16" viewBox="0 0 16.5 16"><polygon points="0.6,4.4 4.2,0.8 15.8,0.8 12.2,4.4" fill="#e6e6e6" stroke="#555" stroke-width="0.9" stroke-linejoin="round"/><polygon points="12.2,4.4 15.8,0.8 15.8,11.4 12.2,15.4" fill="#bdbdbd" stroke="#555" stroke-width="0.9" stroke-linejoin="round"/><rect x="0.6" y="4.4" width="11.6" height="11" fill="#dcdcdc" stroke="#555" stroke-width="0.9"/></svg>
<svg style="left:721.7px;top:1012.8px" width="16.5" height="16" viewBox="0 0 16.5 16"><path d="M1.6,1.6H13.4V8M1.6,1.6V13.6H8" fill="none" stroke="#555" stroke-width="0.9" stroke-dasharray="9 2.4"/><rect x="0.4" y="0.4" width="2.2" height="2.2" fill="#1e88e5"/><rect x="12.4" y="0.4" width="2.2" height="2.2" fill="#1e88e5"/><rect x="0.4" y="12.6" width="2.2" height="2.2" fill="#1e88e5"/><path d="M9,13.6 L13.4,8.2 L15.6,10.2 L11.2,15.2Z" fill="#f6b73c"/><circle cx="14.8" cy="9" r="1.5" fill="#f0323c"/><polygon points="9,13.6 11.2,15.2 8.2,15.8" fill="#555"/></svg>
<svg style="left:745.6px;top:1012.8px" width="16.5" height="16" viewBox="0 0 16.5 16"><polygon points="0.3,3.2 2.2,0.8 11.8,0.4 10,3.2" fill="#9fd0f7"/><rect x="0.3" y="3.2" width="9.7" height="9.6" fill="#66aee6"/><polygon points="10,3.2 11.8,0.4 11.8,10 10,12.8" fill="#3f8fd0"/><path d="M0.3,13.4H10.2L12,11" fill="none" stroke="#bdbdbd" stroke-width="1.6"/><path d="M14.5,2V12.6" stroke="#222" stroke-width="1"/><polygon points="14.5,0.6 16,3.4 13,3.4" fill="#222"/></svg>
<svg style="left:769.6px;top:1012.8px" width="16.5" height="16" viewBox="0 0 16.5 16"><path d="M0.5,4.6 L4.3,0.6 H6.5 L7.8,1.6 V5.8 L7.2,7 L4.6,7.7 V13.1 L1.8,15.7 L0.5,14.8Z" fill="#dedede" stroke="#5e5e5e" stroke-width="1" stroke-linejoin="round"/><path d="M1.4,5.2 L2.6,4 V13.6 L1.4,14.4Z" fill="#f4f4f4"/><path d="M4.6,1.6 H6.2 L6.8,2.2 V5.6 L4.6,6.4Z" fill="#f0f0f0"/><path d="M11.7,2.3 L12.7,1.3 L15.9,4.6 V14.8 L14.5,15.7 L11.7,12.9 L9.3,12.6 L8.5,11.7 V6.3 L11.7,6.4Z" fill="#d6d6d6" stroke="#5e5e5e" stroke-width="1" stroke-linejoin="round"/><path d="M12.6,2.8 L14.9,5.2 V14 L12.6,12Z" fill="#ececec"/><path d="M5.55,8.4V11.2M10.6,4.4V7.9" stroke="#1e90ee" stroke-width="1.3" stroke-linecap="round"/></svg>
<svg style="left:793.5px;top:1012.8px" width="16.5" height="16" viewBox="0 0 16.5 16"><path d="M0.5,4.6 L4.3,0.6 H6.5 L7.8,1.6 V5.8 L7.2,7 L4.6,7.7 V13.1 L1.8,15.7 L0.5,14.8Z" fill="#dedede" stroke="#5e5e5e" stroke-width="1" stroke-linejoin="round"/><path d="M1.4,5.2 L2.6,4 V13.6 L1.4,14.4Z" fill="#f4f4f4"/><path d="M4.6,1.6 H6.2 L6.8,2.2 V5.6 L4.6,6.4Z" fill="#f0f0f0"/><path d="M11.7,2.3 L12.7,1.3 L15.9,4.6 V14.8 L14.5,15.7 L11.7,12.9 L9.3,12.6 L8.5,11.7 V6.3 L11.7,6.4Z" fill="#d6d6d6" stroke="#5e5e5e" stroke-width="1" stroke-linejoin="round"/><path d="M12.6,2.8 L14.9,5.2 V14 L12.6,12Z" fill="#ececec"/><path d="M5.55,8.4V11.2M10.6,4.4V7.9" stroke="#1e90ee" stroke-width="1.3" stroke-linecap="round"/></svg>
<svg style="left:817.5px;top:1012.8px" width="16.5" height="16" viewBox="0 0 16.5 16"><path d="M0.5,4.6 L4.3,0.6 H6.5 L7.8,1.6 V5.8 L7.2,7 L4.6,7.7 V13.1 L1.8,15.7 L0.5,14.8Z" fill="#dedede" stroke="#5e5e5e" stroke-width="1" stroke-linejoin="round"/><path d="M1.4,5.2 L2.6,4 V13.6 L1.4,14.4Z" fill="#f4f4f4"/><path d="M4.6,1.6 H6.2 L6.8,2.2 V5.6 L4.6,6.4Z" fill="#f0f0f0"/><path d="M11.7,2.3 L12.7,1.3 L15.9,4.6 V14.8 L14.5,15.7 L11.7,12.9 L9.3,12.6 L8.5,11.7 V6.3 L11.7,6.4Z" fill="#d6d6d6" stroke="#5e5e5e" stroke-width="1" stroke-linejoin="round"/><path d="M12.6,2.8 L14.9,5.2 V14 L12.6,12Z" fill="#ececec"/><path d="M5.55,8.4V11.2M10.6,4.4V7.9" stroke="#1e90ee" stroke-width="1.3" stroke-linecap="round"/></svg>
<svg style="left:841.4px;top:1012.8px" width="16.5" height="16" viewBox="0 0 16.5 16"><path d="M0.6,1.6 Q0.6,0.6 1.8,0.5 L7,0.2 Q8,0.2 8,1.2 V5.6 L6.6,7.4 H1.6 Q0.6,7.4 0.6,6.4Z" fill="#dcdcdc" stroke="#666" stroke-width="0.9"/><path d="M8.8,9.6 Q8.8,8.6 10,8.5 L15.2,8.2 Q16.2,8.2 16.2,9.2 V13.6 L14.8,15.4 H9.8 Q8.8,15.4 8.8,14.4Z" fill="#dcdcdc" stroke="#666" stroke-width="0.9"/><path d="M1.6,10.2V13H5.4" fill="none" stroke="#222" stroke-width="1.1"/><polygon points="4.6,11.2 7,13 4.6,14.8" fill="#222"/></svg>
<svg style="left:865.4px;top:1012.8px" width="16.5" height="16" viewBox="0 0 16.5 16"><path d="M0.6,1.6 Q0.6,0.6 1.8,0.5 L7,0.2 Q8,0.2 8,1.2 V5.6 L6.6,7.4 H1.6 Q0.6,7.4 0.6,6.4Z" fill="#dcdcdc" stroke="#666" stroke-width="0.9"/><path d="M8.8,9.6 Q8.8,8.6 10,8.5 L15.2,8.2 Q16.2,8.2 16.2,9.2 V13.6 L14.8,15.4 H9.8 Q8.8,15.4 8.8,14.4Z" fill="#dcdcdc" stroke="#666" stroke-width="0.9"/><path d="M1.6,10.2V13H5.4" fill="none" stroke="#222" stroke-width="1.1"/><polygon points="4.6,11.2 7,13 4.6,14.8" fill="#222"/></svg>
<svg style="left:889.3px;top:1012.8px" width="16.5" height="16" viewBox="0 0 16.5 16"><path d="M0.5,4.6 L4.3,0.6 H6.5 L7.8,1.6 V5.8 L7.2,7 L4.6,7.7 V13.1 L1.8,15.7 L0.5,14.8Z" fill="#dedede" stroke="#5e5e5e" stroke-width="1" stroke-linejoin="round"/><path d="M1.4,5.2 L2.6,4 V13.6 L1.4,14.4Z" fill="#f4f4f4"/><path d="M4.6,1.6 H6.2 L6.8,2.2 V5.6 L4.6,6.4Z" fill="#f0f0f0"/><path d="M11.7,2.3 L12.7,1.3 L15.9,4.6 V14.8 L14.5,15.7 L11.7,12.9 L9.3,12.6 L8.5,11.7 V6.3 L11.7,6.4Z" fill="#d6d6d6" stroke="#5e5e5e" stroke-width="1" stroke-linejoin="round"/><path d="M12.6,2.8 L14.9,5.2 V14 L12.6,12Z" fill="#ececec"/><path d="M5.55,8.4V11.2M10.6,4.4V7.9" stroke="#1e90ee" stroke-width="1.3" stroke-linecap="round"/></svg>
<svg style="left:913.3px;top:1012.8px" width="16.5" height="16" viewBox="0 0 16.5 16"><path d="M0.5,4.6 L4.3,0.6 H6.5 L7.8,1.6 V5.8 L7.2,7 L4.6,7.7 V13.1 L1.8,15.7 L0.5,14.8Z" fill="#dedede" stroke="#5e5e5e" stroke-width="1" stroke-linejoin="round"/><path d="M1.4,5.2 L2.6,4 V13.6 L1.4,14.4Z" fill="#f4f4f4"/><path d="M4.6,1.6 H6.2 L6.8,2.2 V5.6 L4.6,6.4Z" fill="#f0f0f0"/><path d="M11.7,2.3 L12.7,1.3 L15.9,4.6 V14.8 L14.5,15.7 L11.7,12.9 L9.3,12.6 L8.5,11.7 V6.3 L11.7,6.4Z" fill="#d6d6d6" stroke="#5e5e5e" stroke-width="1" stroke-linejoin="round"/><path d="M12.6,2.8 L14.9,5.2 V14 L12.6,12Z" fill="#ececec"/><path d="M5.55,8.4V11.2M10.6,4.4V7.9" stroke="#1e90ee" stroke-width="1.3" stroke-linecap="round"/></svg>
<svg style="left:937.2px;top:1012.8px" width="16.5" height="16" viewBox="0 0 16.5 16"><path d="M0.5,4.6 L4.3,0.6 H6.5 L7.8,1.6 V5.8 L7.2,7 L4.6,7.7 V13.1 L1.8,15.7 L0.5,14.8Z" fill="#dedede" stroke="#5e5e5e" stroke-width="1" stroke-linejoin="round"/><path d="M1.4,5.2 L2.6,4 V13.6 L1.4,14.4Z" fill="#f4f4f4"/><path d="M4.6,1.6 H6.2 L6.8,2.2 V5.6 L4.6,6.4Z" fill="#f0f0f0"/><path d="M11.7,2.3 L12.7,1.3 L15.9,4.6 V14.8 L14.5,15.7 L11.7,12.9 L9.3,12.6 L8.5,11.7 V6.3 L11.7,6.4Z" fill="#d6d6d6" stroke="#5e5e5e" stroke-width="1" stroke-linejoin="round"/><path d="M12.6,2.8 L14.9,5.2 V14 L12.6,12Z" fill="#ececec"/><path d="M5.55,8.4V11.2M10.6,4.4V7.9" stroke="#1e90ee" stroke-width="1.3" stroke-linecap="round"/></svg>
<svg style="left:961.2px;top:1012.8px" width="16.5" height="16" viewBox="0 0 16.5 16"><path d="M0.6,1.6 Q0.6,0.6 1.8,0.5 L7,0.2 Q8,0.2 8,1.2 V5.6 L6.6,7.4 H1.6 Q0.6,7.4 0.6,6.4Z" fill="#dcdcdc" stroke="#666" stroke-width="0.9"/><path d="M8.8,9.6 Q8.8,8.6 10,8.5 L15.2,8.2 Q16.2,8.2 16.2,9.2 V13.6 L14.8,15.4 H9.8 Q8.8,15.4 8.8,14.4Z" fill="#dcdcdc" stroke="#666" stroke-width="0.9"/><path d="M1.6,10.2V13H5.4" fill="none" stroke="#222" stroke-width="1.1"/><polygon points="4.6,11.2 7,13 4.6,14.8" fill="#222"/></svg>
<svg style="left:985.1px;top:1012.8px" width="16.5" height="16" viewBox="0 0 16.5 16"><path d="M0.5,4.6 L4.3,0.6 H6.5 L7.8,1.6 V5.8 L7.2,7 L4.6,7.7 V13.1 L1.8,15.7 L0.5,14.8Z" fill="#dedede" stroke="#5e5e5e" stroke-width="1" stroke-linejoin="round"/><path d="M1.4,5.2 L2.6,4 V13.6 L1.4,14.4Z" fill="#f4f4f4"/><path d="M4.6,1.6 H6.2 L6.8,2.2 V5.6 L4.6,6.4Z" fill="#f0f0f0"/><path d="M11.7,2.3 L12.7,1.3 L15.9,4.6 V14.8 L14.5,15.7 L11.7,12.9 L9.3,12.6 L8.5,11.7 V6.3 L11.7,6.4Z" fill="#d6d6d6" stroke="#5e5e5e" stroke-width="1" stroke-linejoin="round"/><path d="M12.6,2.8 L14.9,5.2 V14 L12.6,12Z" fill="#ececec"/><path d="M5.55,8.4V11.2M10.6,4.4V7.9" stroke="#1e90ee" stroke-width="1.3" stroke-linecap="round"/></svg>
<svg style="left:1009.1px;top:1012.8px" width="16.5" height="16" viewBox="0 0 16.5 16"><path d="M0.5,4.6 L4.3,0.6 H6.5 L7.8,1.6 V5.8 L7.2,7 L4.6,7.7 V13.1 L1.8,15.7 L0.5,14.8Z" fill="#dedede" stroke="#5e5e5e" stroke-width="1" stroke-linejoin="round"/><path d="M1.4,5.2 L2.6,4 V13.6 L1.4,14.4Z" fill="#f4f4f4"/><path d="M4.6,1.6 H6.2 L6.8,2.2 V5.6 L4.6,6.4Z" fill="#f0f0f0"/><path d="M11.7,2.3 L12.7,1.3 L15.9,4.6 V14.8 L14.5,15.7 L11.7,12.9 L9.3,12.6 L8.5,11.7 V6.3 L11.7,6.4Z" fill="#d6d6d6" stroke="#5e5e5e" stroke-width="1" stroke-linejoin="round"/><path d="M12.6,2.8 L14.9,5.2 V14 L12.6,12Z" fill="#ececec"/><path d="M5.55,8.4V11.2M10.6,4.4V7.9" stroke="#1e90ee" stroke-width="1.3" stroke-linecap="round"/></svg>
<svg style="left:155.0px;top:1032.0px" width="880" height="7" viewBox="0 0 880 7"><rect x="0.0" y="0" width="1.6" height="5.4" fill="#cdcdcd"/><rect x="23.9" y="0" width="1.6" height="5.4" fill="#cdcdcd"/><rect x="47.9" y="0" width="1.6" height="5.4" fill="#cdcdcd"/><rect x="71.8" y="0" width="1.6" height="5.4" fill="#cdcdcd"/><rect x="95.8" y="0" width="1.6" height="5.4" fill="#cdcdcd"/><rect x="119.8" y="0" width="1.6" height="5.4" fill="#cdcdcd"/><rect x="143.7" y="0" width="1.6" height="5.4" fill="#cdcdcd"/><rect x="167.7" y="0" width="1.6" height="5.4" fill="#cdcdcd"/><rect x="191.6" y="0" width="1.6" height="5.4" fill="#cdcdcd"/><rect x="215.5" y="0" width="1.6" height="5.4" fill="#cdcdcd"/><rect x="239.5" y="0" width="1.6" height="5.4" fill="#cdcdcd"/><rect x="263.4" y="0" width="1.6" height="5.4" fill="#cdcdcd"/><rect x="287.4" y="0" width="1.6" height="5.4" fill="#cdcdcd"/><rect x="311.3" y="0" width="1.6" height="5.4" fill="#cdcdcd"/><rect x="335.3" y="0" width="1.6" height="5.4" fill="#cdcdcd"/><rect x="359.2" y="0" width="1.6" height="5.4" fill="#cdcdcd"/><rect x="383.2" y="0" width="1.6" height="5.4" fill="#cdcdcd"/><rect x="407.1" y="0" width="1.6" height="5.4" fill="#cdcdcd"/><rect x="431.1" y="0" width="1.6" height="5.4" fill="#cdcdcd"/><rect x="455.1" y="0" width="1.6" height="5.4" fill="#cdcdcd"/><rect x="479.0" y="0" width="1.6" height="5.4" fill="#cdcdcd"/><rect x="502.9" y="0" width="1.6" height="5.4" fill="#cdcdcd"/><rect x="526.9" y="0" width="1.6" height="5.4" fill="#cdcdcd"/><rect x="550.9" y="0" width="1.6" height="5.4" fill="#cdcdcd"/><rect x="574.8" y="0" width="1.6" height="5.4" fill="#cdcdcd"/><rect x="598.8" y="0" width="1.6" height="5.4" fill="#cdcdcd"/><rect x="622.7" y="0" width="1.6" height="5.4" fill="#cdcdcd"/><rect x="646.6" y="0" width="1.6" height="5.4" fill="#cdcdcd"/><rect x="670.6" y="0" width="1.6" height="5.4" fill="#cdcdcd"/><rect x="694.5" y="0" width="1.6" height="5.4" fill="#cdcdcd"/><rect x="718.5" y="0" width="1.6" height="5.4" fill="#cdcdcd"/><rect x="742.4" y="0" width="1.6" height="5.4" fill="#cdcdcd"/><rect x="766.4" y="0" width="1.6" height="5.4" fill="#cdcdcd"/><rect x="790.4" y="0" width="1.6" height="5.4" fill="#cdcdcd"/><rect x="814.3" y="0" width="1.6" height="5.4" fill="#cdcdcd"/><rect x="838.2" y="0" width="1.6" height="5.4" fill="#cdcdcd"/><rect x="862.2" y="0" width="1.6" height="5.4" fill="#cdcdcd"/><rect x="-15" y="5" width="880" height="1.8" fill="#cdcdcd"/></svg>
<div class="abs" style="left:140.0px;top:1037.0px;width:4.0px;height:1.8px;background:#f2f2f2"></div>
<svg style="left:1025.0px;top:1007.0px" width="12" height="32.5" viewBox="0 0 12 32.5"><path d="M0,0H12V4.4L6.9,9V32H5.1V9L0,4.4Z" fill="#5c5c5c"/></svg>
<svg style="left:1072.0px;top:1018.0px" width="16.6" height="16.6" viewBox="0 0 16.6 16.6"><path d="M7,0h2.6l0.5,2.2l1.5,0.7l2-1.2l1.8,1.8l-1.2,2l0.7,1.5l2.2,0.5v2.6l-2.2,0.5l-0.7,1.5l1.2,2l-1.8,1.8l-2-1.2l-1.5,0.7l-0.5,2.2h-2.6l-0.5-2.2l-1.5-0.7l-2,1.2l-1.8-1.8l1.2-2l-0.7-1.5l-2.2-0.5v-2.6l2.2-0.5l0.7-1.5l-1.2-2l1.8-1.8l2,1.2l1.5-0.7z" fill="#a3a3a3"/><circle cx="8.3" cy="8.3" r="3" fill="#f2f2f2"/></svg>
<div class="abs" style="left:432.1px;top:968.4px;width:236.8px;height:23.1px;background:#f4f4f4"></div>
<svg style="left:435.4px;top:972.0px" width="15.6" height="16.2" viewBox="0 0 15.6 16.2"><ellipse cx="7.6" cy="10" rx="7" ry="2.8" fill="none" stroke="#333" stroke-width="1.1"/><path d="M7.8,2.4V15.6" stroke="#333" stroke-width="1.2"/><path d="M7.8,0.4L10.6,4H5Z" fill="#fff" stroke="#333" stroke-width="0.8"/><polygon points="0.4,11.6 4.6,10.4 3.4,14.2" fill="#333"/></svg>
<svg style="left:456.4px;top:978.2px" width="5.6" height="3.4" viewBox="0 0 5.6 3.4"><polygon points="0,0 5.6,0 2.8,3.4" fill="#222"/></svg>
<svg style="left:468.2px;top:972.4px" width="16" height="15.6" viewBox="0 0 16 15.6"><path d="M1.6,4.6 L6,1 L7.4,3.2 L10.4,0.6 L11.4,4.6" fill="#d8d8d8" stroke="#444" stroke-width="0.8"/><rect x="0.6" y="4.6" width="14.8" height="10.4" fill="#f0f0f0" stroke="#333" stroke-width="1.1"/><rect x="3.6" y="8.2" width="8.8" height="3.6" fill="#bbb" stroke="#333" stroke-width="0.9"/></svg>
<svg style="left:493.8px;top:972.0px" width="16" height="16.4" viewBox="0 0 16 16.4"><path d="M4.4,9.4 V3.4 Q4.4,2.2 5.4,2.2 Q6.4,2.2 6.4,3.4 V7.4 V1.8 Q6.4,0.6 7.4,0.6 Q8.4,0.6 8.4,1.8 V7.2 V2.2 Q8.4,1.2 9.4,1.2 Q10.4,1.2 10.4,2.4 V7.6 V4 Q10.4,3 11.4,3 Q12.4,3 12.4,4.2 V11 Q12.4,15.6 8.4,15.6 Q5.6,15.6 4,13 L1.2,8.6 Q0.8,7.6 1.8,7.2 Q2.6,7 3.2,7.8Z" fill="#fff" stroke="#333" stroke-width="0.9" stroke-linejoin="round"/></svg>
<svg style="left:519.8px;top:971.6px" width="16.8" height="16.6" viewBox="0 0 16.8 16.6"><circle cx="6" cy="8" r="5" fill="#e6f0fa" stroke="#333" stroke-width="1.2"/><path d="M9.6,11.8L13.6,16" stroke="#333" stroke-width="2.2"/><path d="M11.2,2.6H15.8M13.5,0.4V4.8M11.2,6.6H15.8" stroke="#333" stroke-width="1"/></svg>
<svg style="left:545.4px;top:971.8px" width="16.8" height="16.6" viewBox="0 0 16.8 16.6"><rect x="0.6" y="0.6" width="14" height="14" fill="none" stroke="#444" stroke-width="0.9" stroke-dasharray="2 1.4"/><circle cx="7" cy="7.2" r="5.6" fill="#e6f0fa" stroke="#333" stroke-width="1.2"/><path d="M11,11.4L15.6,16" stroke="#333" stroke-width="2.2"/></svg>
<svg style="left:567.3px;top:978.2px" width="5.6" height="3.4" viewBox="0 0 5.6 3.4"><polygon points="0,0 5.6,0 2.8,3.4" fill="#222"/></svg>
<svg style="left:579.2px;top:972.0px" width="16.2" height="16.2" viewBox="0 0 16.2 16.2"><rect x="0.7" y="0.7" width="14.8" height="11" rx="1" fill="#f0f0f0" stroke="#333" stroke-width="1.2"/><rect x="2.8" y="2.8" width="10.6" height="6.8" fill="#7fb2e8"/><rect x="6.2" y="11.8" width="3.8" height="2.2" fill="#555"/><rect x="3.6" y="14" width="9" height="1.6" fill="#555"/></svg>
<svg style="left:597.4px;top:978.2px" width="5.6" height="3.4" viewBox="0 0 5.6 3.4"><polygon points="0,0 5.6,0 2.8,3.4" fill="#222"/></svg>
<svg style="left:610.0px;top:972.2px" width="15.8" height="15.8" viewBox="0 0 15.8 15.8"><rect x="0.4" y="0.4" width="14.8" height="14.8" fill="#d9d9d9"/><path d="M0.6,0.4V15.2M0.4,0.6H15.2" stroke="#444" stroke-width="0.9"/><path d="M3.5,0.4V15.2M0.4,3.5H15.2" stroke="#444" stroke-width="0.9"/><path d="M6.4,0.4V15.2M0.4,6.4H15.2" stroke="#444" stroke-width="0.9"/><path d="M9.3,0.4V15.2M0.4,9.3H15.2" stroke="#444" stroke-width="0.9"/><path d="M12.2,0.4V15.2M0.4,12.2H15.2" stroke="#444" stroke-width="0.9"/><path d="M15.1,0.4V15.2M0.4,15.1H15.2" stroke="#444" stroke-width="0.9"/></svg>
<svg style="left:628.1px;top:978.2px" width="5.6" height="3.4" viewBox="0 0 5.6 3.4"><polygon points="0,0 5.6,0 2.8,3.4" fill="#222"/></svg>
<svg style="left:640.6px;top:972.6px" width="15.8" height="14.6" viewBox="0 0 15.8 14.6"><rect x="0.5" y="0.5" width="14.8" height="13.6" rx="1" fill="#3b5fa0"/><rect x="1.8" y="1.8" width="5.4" height="4.6" fill="#b9cdee"/><rect x="8.6" y="1.8" width="5.4" height="4.6" fill="#b9cdee"/><rect x="1.8" y="8" width="5.4" height="4.6" fill="#b9cdee"/><rect x="8.6" y="8" width="5.4" height="4.6" fill="#b9cdee"/></svg>
<svg style="left:658.8px;top:978.2px" width="5.6" height="3.4" viewBox="0 0 5.6 3.4"><polygon points="0,0 5.6,0 2.8,3.4" fill="#222"/></svg>
<!-- frag_misc.html -->
<div class="abs" style="left:1096.4px;top:281.0px;width:4.6px;height:459.5px;background:repeating-linear-gradient(172deg,#b8948b 0,#b8948b 9px,#8f7169 9.6px,#c2a198 10.4px,#b18a80 19px);"></div>
<div class="abs" style="left:1096.4px;top:269.3px;width:4.6px;height:12.0px;background:#8c3a33"></div>
<div class="abs" style="left:1100.8px;top:0.0px;width:1.2px;height:1047.0px;background:#1d2434"></div>
<div class="abs" style="left:0.0px;top:0.0px;width:1102.0px;height:1.0px;background:linear-gradient(90deg,#2b3450 0,#2d3a58 20%,#4a3a3a 55%,#6a3a2a 70%,#3a3040 85%,#232c44 100%)"></div>
<!--/CHROME-->
</body>
</html>
